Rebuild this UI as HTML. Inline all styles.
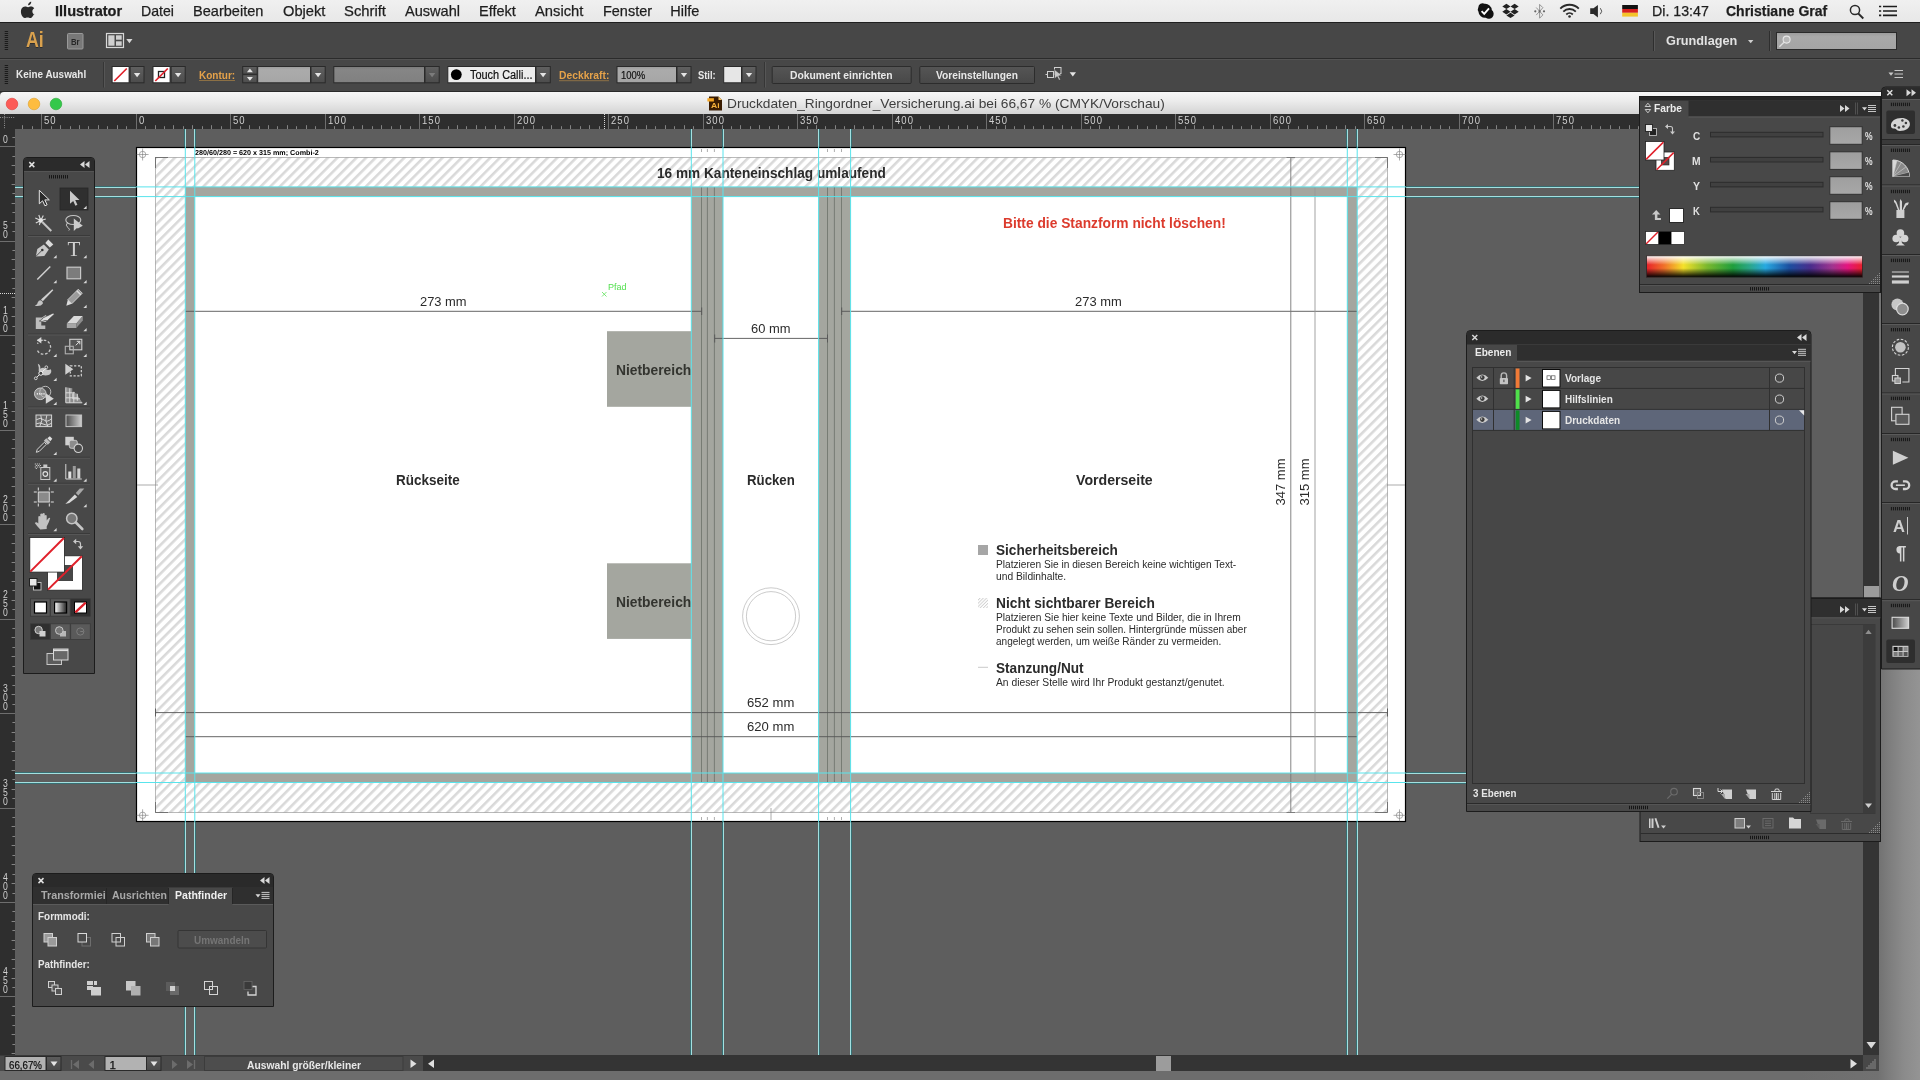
<!DOCTYPE html>
<html lang="de"><head><meta charset="utf-8"><title>Druckdaten_Ringordner_Versicherung.ai</title>
<style>
*{box-sizing:border-box;margin:0;padding:0}
html,body{width:1920px;height:1080px;overflow:hidden;background:#6b6b6b}
body{font-family:"Liberation Sans",sans-serif;font-size:11px;color:#ddd;position:relative}
.a{position:absolute}
.t{position:absolute;white-space:nowrap;line-height:1}
.ui{font-family:"Liberation Sans",sans-serif;font-weight:bold;font-size:11px;color:#dcdcdc;transform-origin:0 50%}
#desk{left:0;top:0;width:1920px;height:1080px;background:linear-gradient(90deg,#6d6d6d 0,#6d6d6d 1800px,#717171 1878px,#7c7c7c 1888px,#8b8b8b 1904px,#949494 1920px)}
#menubar{left:0;top:0;width:1920px;height:22px;background:linear-gradient(#f0f0f0,#e8e8e8)}
#menubar .t{-webkit-text-stroke:0.25px #1e1e1e}
#appbar{left:0;top:22px;width:1920px;height:37px;background:#474747;box-shadow:inset 0 1px 0 #1f1f1f,inset 0 -1px 0 #2b2b2b}
#ctrlbar{left:0;top:59px;width:1920px;height:33px;background:#474747;box-shadow:inset 0 1px 0 #535353,inset 0 -1px 0 #2a2a2a}
#titlebar{left:0;top:92px;width:1881px;height:22px;background:linear-gradient(#f7f7f7 0,#ececec 40%,#d4d4d4 100%);border-radius:4px 0 0 0}
#canvas{left:0;top:114px;width:1863px;height:941px;background:#5e5e5e;overflow:hidden}
#hruler{left:0;top:114px;width:1863px;height:15px;background:#2e2e2e}
#vruler{left:0;top:129px;width:15px;height:926px;background:#2e2e2e}
#vscroll{left:1863px;top:114px;width:16px;height:941px;background:#343434}
#statusbar{left:0;top:1055px;width:1879px;height:16px;background:#4a4a4a;box-shadow:inset 0 1px 0 #3a3a3a}
.panel{position:absolute;background:#484848;border:1px solid #262626}
.phead{position:absolute;left:0;right:0;top:0;background:#303030}
.dd{position:absolute;background:linear-gradient(#5a5a5a,#4a4a4a);border:1px solid #2c2c2c}
.fld{position:absolute;border:1px solid #2c2c2c}
</style></head>
<body>
<div id="root" class="a" style="left:0;top:0;width:1920px;height:1080px;will-change:transform;overflow:hidden">
<div id="desk" class="a"></div>
<div id="menubar" class="a">
<svg class="a" style="left:20px;top:1px" width="16" height="19" viewBox="0 0 16 19"><path fill="#2a2a2a" d="M10.9 1c.1 1-.3 1.9-.9 2.6-.6.7-1.500 1.200-2.400 1.100-.1-.9.300-1.900.9-2.500C9.100 1.500 10.100 1 10.900 1z M13.900 13.400c-.4.900-.600 1.300-1.100 2.100-.700 1.100-1.700 2.500-2.900 2.500-1.100 0-1.400-.700-2.900-.700-1.500 0-1.800.700-2.900.700-1.200 0-2.200-1.300-2.900-2.400C-.100 13.400-.300 10 .900 8.100 1.700 6.800 3.100 6 4.400 6c1.300 0 2.100.700 3.200.700 1.100 0 1.700-.700 3.200-.700 1.100 0 2.300.600 3.200 1.700-2.800 1.500-2.300 5.500.100 6.300z" transform="translate(0.8 -0.2) scale(0.96)"/></svg>
<div class="t" style="left:54.80px;top:3.82px;font-size:14.50px;font-weight:bold;color:#1e1e1e;transform:scaleX(1.0038);transform-origin:0 50%;">Illustrator</div>
<div class="t" style="left:140.60px;top:3.82px;font-size:14.50px;font-weight:normal;color:#1e1e1e;transform:scaleX(0.9717);transform-origin:0 50%;">Datei</div>
<div class="t" style="left:192.90px;top:3.82px;font-size:14.50px;font-weight:normal;color:#1e1e1e;transform:scaleX(1.0042);transform-origin:0 50%;">Bearbeiten</div>
<div class="t" style="left:282.70px;top:3.82px;font-size:14.50px;font-weight:normal;color:#1e1e1e;transform:scaleX(1.0118);transform-origin:0 50%;">Objekt</div>
<div class="t" style="left:344.00px;top:3.82px;font-size:14.50px;font-weight:normal;color:#1e1e1e;transform:scaleX(1.0217);transform-origin:0 50%;">Schrift</div>
<div class="t" style="left:405.00px;top:3.82px;font-size:14.50px;font-weight:normal;color:#1e1e1e;transform:scaleX(1.0035);transform-origin:0 50%;">Auswahl</div>
<div class="t" style="left:479.20px;top:3.82px;font-size:14.50px;font-weight:normal;color:#1e1e1e;transform:scaleX(0.9992);transform-origin:0 50%;">Effekt</div>
<div class="t" style="left:535.00px;top:3.82px;font-size:14.50px;font-weight:normal;color:#1e1e1e;transform:scaleX(1.0156);transform-origin:0 50%;">Ansicht</div>
<div class="t" style="left:602.60px;top:3.82px;font-size:14.50px;font-weight:normal;color:#1e1e1e;transform:scaleX(0.9968);transform-origin:0 50%;">Fenster</div>
<div class="t" style="left:670.30px;top:3.82px;font-size:14.50px;font-weight:normal;color:#1e1e1e;transform:scaleX(1.0000);transform-origin:0 50%;">Hilfe</div>
<div class="t" style="left:1652.00px;top:3.82px;font-size:14.50px;font-weight:normal;color:#1e1e1e;transform:scaleX(0.9781);transform-origin:0 50%;">Di. 13:47</div>
<div class="t" style="left:1726.30px;top:3.82px;font-size:14.50px;font-weight:bold;color:#1e1e1e;transform:scaleX(0.9660);transform-origin:0 50%;">Christiane Graf</div>
<svg class="a" style="left:1470px;top:0" width="440" height="22" viewBox="1470 0 440 22">
<path fill="#111" d="M1478.3 7.400a4.300 4.300 0 0 1 6.300-3.600 6.600 6.600 0 0 1 7.200 6.300 4.600 4.600 0 0 1-6 7.700 6.800 6.800 0 0 1-7.400-6.400 4.300 4.300 0 0 1-.1-4z"/><path d="M1481.600 11.200l2.600 2.600 4.800-5.500" fill="none" stroke="#fff" stroke-width="1.900"/>
<path fill="#222" d="M1506.400 3.700l4.100 2.700-4.100 2.700-4.100-2.700z M1514.600 3.700l4.100 2.700-4.100 2.700-4.100-2.700z M1502.300 11.800l4.100-2.700 4.100 2.700-4.100 2.700z M1510.500 11.800l4.100-2.700 4.100 2.700-4.100 2.700z M1506.400 15.400l4.100-2.700 4.100 2.700-4.100 2.700z"/>
<path d="M1536.200 7.500l6.700 7.400-3.300 3.300V4.400l3.300 3.300-6.700 7.400" fill="none" stroke="#8b8b8b" stroke-width="0.9"/><circle cx="1535.300" cy="11.300" r="1.100" fill="#666"/><circle cx="1539.600" cy="11.300" r="1.100" fill="#666"/><circle cx="1544" cy="11.300" r="1.100" fill="#666"/>
<g fill="none" stroke="#2a2a2a" stroke-width="1.800"><path d="M1560.300 8.600a13 13 0 0 1 18.500 0"/><path d="M1563.300 11.600a8.800 8.800 0 0 1 12.500 0"/><path d="M1566.300 14.500a4.600 4.600 0 0 1 6.500 0"/></g><circle cx="1569.550" cy="16.500" r="1.300" fill="#2a2a2a"/>
<path fill="#2a2a2a" d="M1590.200 8.300h3.300l4.400-3.400v12.500l-4.400-3.400h-3.300z"/><path d="M1600.300 8.200a4.300 4.300 0 0 1 0 6" fill="none" stroke="#555" stroke-width="1"/>
<rect x="1622.2" y="5" width="15.700" height="4" fill="#111"/><rect x="1622.2" y="9" width="15.700" height="3.800" fill="#d71f1f"/><rect x="1622.2" y="12.800" width="15.700" height="3.800" fill="#f4c42a"/>
<circle cx="1855" cy="10" r="4.600" fill="none" stroke="#2a2a2a" stroke-width="1.500"/><path d="M1858.300 13.500l5 5" stroke="#2a2a2a" stroke-width="1.900" fill="none"/>
<path d="M1879 6.500h2.200 M1883 6.500h14 M1879 11h2.200 M1883 11h14 M1879 15.400h2.200 M1883 15.400h14" stroke="#1c1c1c" stroke-width="1.700" fill="none"/>
</svg>
</div>

<div id="appbar" class="a">
<svg class="a" style="left:0;top:0" width="1920" height="37" viewBox="0 22 1920 37">
<path d="M4.7 31.5h3.4M4.7 33.5h3.4M4.7 35.5h3.4M4.7 37.5h3.4M4.7 39.5h3.4M4.7 41.5h3.4M4.7 43.5h3.4M4.7 45.5h3.4M4.7 47.5h3.4M4.7 49.5h3.4" stroke="#1b1b1b" stroke-width="1" fill="none"/><rect x="67.500" y="33.500" width="15.500" height="15.500" rx="1" fill="#787878" stroke="#9a9a9a" stroke-width="1"/>
<rect x="106.500" y="33.500" width="17" height="14" fill="#4a4a4a" stroke="#d8d8d8" stroke-width="1.200"/><rect x="108.300" y="35.300" width="6.200" height="10.400" fill="#cfcfcf"/><rect x="116" y="35.300" width="5.700" height="4.400" fill="#cfcfcf"/><rect x="116" y="41.300" width="5.700" height="4.400" fill="#cfcfcf"/><path d="M126.300 39h6.200l-3.100 4.200z" fill="#d8d8d8"/>
<path d="M1653.5 31v20" stroke="#2e2e2e" stroke-width="1"/><path d="M1654.5 31v20" stroke="#585858" stroke-width="1"/>
<path d="M1769.5 31v20" stroke="#2e2e2e" stroke-width="1"/><path d="M1770.5 31v20" stroke="#585858" stroke-width="1"/>
<path d="M1748 40h5.400l-2.700 3.300z" fill="#d0d0d0"/>
<defs><linearGradient id="sf" x1="0" y1="0" x2="0" y2="1"><stop offset="0" stop-color="#9a9a9a"/><stop offset="0.25" stop-color="#a9a9a9"/><stop offset="1" stop-color="#a4a4a4"/></linearGradient></defs><rect x="1776.500" y="32.500" width="120" height="17" fill="url(#sf)" stroke="#2a2a2a" stroke-width="1"/>
<circle cx="1786.600" cy="39.600" r="3.500" fill="#b8b8b8" stroke="#e6e6e6" stroke-width="1.100"/><path d="M1784 42.300l-4.600 4.400" stroke="#e0e0e0" stroke-width="1.300"/>
</svg>
<div class="t" style="left:25.80px;top:7.50px;font-size:21.50px;font-weight:bold;color:#d9a14e;transform:scaleX(0.8279);transform-origin:0 50%;text-shadow:0 1px 0 rgba(0,0,0,.35);">Ai</div>
<div class="t" style="left:71.40px;top:14.96px;font-size:9.50px;font-weight:bold;color:#262626;transform:scaleX(0.8156);transform-origin:0 50%;">Br</div>
<div class="t" style="left:1666.30px;top:13.24px;font-size:12.60px;font-weight:bold;color:#e2e2e2;transform:scaleX(1.0087);transform-origin:0 50%;">Grundlagen</div>
</div>

<div id="ctrlbar" class="a">
<svg class="a" style="left:0;top:0" width="1920" height="33" viewBox="0 59 1920 33">
<defs><linearGradient id="ddg" x1="0" y1="0" x2="0" y2="1"><stop offset="0" stop-color="#606060"/><stop offset="1" stop-color="#4c4c4c"/></linearGradient><linearGradient id="btg" x1="0" y1="0" x2="0" y2="1"><stop offset="0" stop-color="#555"/><stop offset="1" stop-color="#484848"/></linearGradient><linearGradient id="lf" x1="0" y1="0" x2="0" y2="1"><stop offset="0" stop-color="#9c9c9c"/><stop offset="0.2" stop-color="#ababab"/><stop offset="1" stop-color="#a6a6a6"/></linearGradient><linearGradient id="df" x1="0" y1="0" x2="0" y2="1"><stop offset="0" stop-color="#7a7a7a"/><stop offset="0.2" stop-color="#868686"/><stop offset="1" stop-color="#808080"/></linearGradient></defs>
<path d="M4.7 65.5h3.4M4.7 67.5h3.4M4.7 69.5h3.4M4.7 71.5h3.4M4.7 73.5h3.4M4.7 75.5h3.4M4.7 77.5h3.4M4.7 79.5h3.4M4.7 81.5h3.4M4.7 83.5h3.4" stroke="#1b1b1b" stroke-width="1" fill="none"/><path d="M103.5 62v25.500" stroke="#363636" stroke-width="1"/><path d="M104.5 62v25.500" stroke="#565656" stroke-width="1"/>
<path d="M764.5 62v25.500" stroke="#363636" stroke-width="1"/><path d="M765.5 62v25.500" stroke="#565656" stroke-width="1"/>
<rect x="112.1" y="66.5" width="17.0" height="16.3" fill="#fff" stroke="#2a2a2a" stroke-width="1"/>
<path d="M114.300 81l12.500-12.500" stroke="#e0202a" stroke-width="1.700"/>
<rect x="130.1" y="66.5" width="13.9" height="16.3" fill="url(#ddg)" stroke="#2a2a2a" stroke-width="1"/><path d="M133.9 72.9h6.400l-3.200 4.300z" fill="#e4e4e4"/>
<rect x="153.0" y="66.5" width="17.1" height="16.3" fill="#fff" stroke="#2a2a2a" stroke-width="1"/>
<rect x="158.500" y="71.500" width="6" height="6" fill="none" stroke="#222" stroke-width="1.300"/><path d="M155.300 81l12.500-12.500" stroke="#e0202a" stroke-width="1.700"/>
<rect x="171.1" y="66.5" width="14.1" height="16.3" fill="url(#ddg)" stroke="#2a2a2a" stroke-width="1"/><path d="M174.9 72.9h6.400l-3.200 4.300z" fill="#e4e4e4"/>
<path d="M199.500 80.500H235.500" stroke="#d39a45" stroke-width="1" stroke-dasharray="1 1"/>
<rect x="242.7" y="66.5" width="14.5" height="7.7" fill="url(#ddg)" stroke="#2a2a2a" stroke-width="1"/>
<rect x="242.7" y="74.7" width="14.5" height="8.1" fill="url(#ddg)" stroke="#2a2a2a" stroke-width="1"/>
<path d="M246.900 72.300h6l-3-3.700z M246.900 77h6l-3 3.700z" fill="#e4e4e4"/>
<rect x="257.7" y="66.5" width="52.8" height="16.3" fill="url(#lf)" stroke="#2a2a2a" stroke-width="1"/>
<rect x="311.0" y="66.5" width="14.2" height="16.3" fill="url(#ddg)" stroke="#2a2a2a" stroke-width="1"/><path d="M314.9 72.9h6.400l-3.200 4.300z" fill="#e4e4e4"/>
<rect x="333.8" y="66.5" width="90.7" height="16.3" fill="url(#df)" stroke="#2a2a2a" stroke-width="1"/>
<rect x="425.0" y="66.5" width="14.2" height="16.3" fill="url(#ddg)" stroke="#2a2a2a" stroke-width="1"/><path d="M428.9 72.9h6.400l-3.200 4.300z" fill="#7c7c7c"/>
<rect x="447.8" y="66.5" width="87.7" height="16.3" fill="#ececec" stroke="#2a2a2a" stroke-width="1"/>
<circle cx="456.300" cy="74.600" r="5.400" fill="#000"/>
<rect x="536.0" y="66.5" width="14.3" height="16.3" fill="url(#ddg)" stroke="#2a2a2a" stroke-width="1"/><path d="M539.9 72.9h6.400l-3.200 4.300z" fill="#e4e4e4"/>
<path d="M559.500 80.700H609.500" stroke="#d39a45" stroke-width="1" stroke-dasharray="1 1"/>
<rect x="617.0" y="66.5" width="59.5" height="16.3" fill="url(#lf)" stroke="#2a2a2a" stroke-width="1"/>
<rect x="677.0" y="66.5" width="14.0" height="16.3" fill="url(#ddg)" stroke="#2a2a2a" stroke-width="1"/><path d="M680.8 72.9h6.400l-3.200 4.300z" fill="#e4e4e4"/>
<rect x="723.7" y="66.5" width="17.8" height="16.3" fill="#e6e6e6" stroke="#2a2a2a" stroke-width="1"/>
<rect x="742.0" y="66.5" width="14.0" height="16.3" fill="url(#ddg)" stroke="#2a2a2a" stroke-width="1"/><path d="M745.8 72.9h6.400l-3.200 4.300z" fill="#e4e4e4"/>
<rect x="772.2" y="66.500" width="139.0" height="17" rx="1" fill="url(#btg)" stroke="#2c2c2c" stroke-width="1"/>
<rect x="919.8" y="66.500" width="114.7" height="17" rx="1" fill="url(#btg)" stroke="#2c2c2c" stroke-width="1"/>
<g fill="none" stroke="#d0d0d0" stroke-width="1"><rect x="1047.500" y="71.500" width="6" height="6"/><rect x="1054.500" y="67.500" width="6.500" height="6"/><path d="M1045.500 74.500h2 M1053.500 74.500h2"/></g><path d="M1054.500 69.500l7.500 6-3.300.4 1.800 3.700-1.500.7-1.800-3.700-2.700 2.200z" fill="#c8c8c8" stroke="#3a3a3a" stroke-width="0.500"/><path d="M1069.600 72.300h6.400l-3.200 4.300z" fill="#e4e4e4"/>
<path d="M1888.500 72.500h5l-2.500 3.200z" fill="#c8c8c8"/><path d="M1894.500 70.500h8.500 M1894.500 74h8.500 M1894.500 77.500h8.500" stroke="#c8c8c8" stroke-width="1.100"/>
</svg>
<div class="t" style="left:15.60px;top:8.93px;font-size:11.60px;font-weight:bold;color:#e8e8e8;transform:scaleX(0.8554);transform-origin:0 50%;">Keine Auswahl</div>
<div class="t" style="left:199.40px;top:9.93px;font-size:11.60px;font-weight:bold;color:#e5a24a;transform:scaleX(0.8645);transform-origin:0 50%;">Kontur:</div>
<div class="t" style="left:469.50px;top:9.94px;font-size:12.00px;font-weight:normal;color:#111;transform:scaleX(0.9098);transform-origin:0 50%;-webkit-text-stroke:0.2px #111;">Touch Calli...</div>
<div class="t" style="left:559.30px;top:9.93px;font-size:11.60px;font-weight:bold;color:#e5a24a;transform:scaleX(0.8885);transform-origin:0 50%;">Deckkraft:</div>
<div class="t" style="left:621.30px;top:9.83px;font-size:11.60px;font-weight:normal;color:#111;transform:scaleX(0.8183);transform-origin:0 50%;-webkit-text-stroke:0.2px #111;">100%</div>
<div class="t" style="left:698.00px;top:9.83px;font-size:11.60px;font-weight:bold;color:#e8e8e8;transform:scaleX(0.8073);transform-origin:0 50%;">Stil:</div>
<div class="t" style="left:790.00px;top:10.13px;font-size:11.60px;font-weight:bold;color:#e8e8e8;transform:scaleX(0.8902);transform-origin:0 50%;">Dokument einrichten</div>
<div class="t" style="left:935.70px;top:10.13px;font-size:11.60px;font-weight:bold;color:#e8e8e8;transform:scaleX(0.8792);transform-origin:0 50%;">Voreinstellungen</div>
</div>

<div class="a" style="left:0;top:92px;width:1881px;height:6px;background:#3a3a3a"></div>
<div id="titlebar" class="a">
<svg class="a" style="left:0;top:0" width="1881" height="22" viewBox="0 92 1881 22">
<circle cx="12.0" cy="104" r="5.800" fill="#fc5b57" stroke="#df3d38" stroke-width="0.600"/>
<circle cx="34.0" cy="104" r="5.800" fill="#fdbc40" stroke="#de9f29" stroke-width="0.600"/>
<circle cx="56.0" cy="104" r="5.800" fill="#34c84a" stroke="#27a835" stroke-width="0.600"/>
<path d="M709 96.500h9.500l3.500 3.500v10.500h-13z" fill="#3a1c02"/><path d="M718.500 96.500l3.500 3.500h-3.500z" fill="#f5c56b"/><rect x="707.400" y="98.200" width="6.500" height="3.300" fill="#f5a623"/>
</svg>
<div class="t" style="left:711.20px;top:11.22px;font-size:6.50px;font-weight:bold;color:#f7b23a;transform:scaleX(1.3231);transform-origin:0 50%;">Ai</div>
<div class="t" style="left:727.40px;top:4.95px;font-size:13.00px;font-weight:normal;color:#3e3e3e;transform:scaleX(1.0553);transform-origin:0 50%;">Druckdaten_Ringordner_Versicherung.ai bei 66,67 % (CMYK/Vorschau)</div>
</div>

<div id="canvas" class="a">
<svg class="a" style="left:0;top:-114px" width="1920" height="1080" viewBox="0 0 1920 1080">
<defs><pattern id="hatch" width="6.76" height="8" patternUnits="userSpaceOnUse" patternTransform="translate(5.67 0) rotate(45)"><rect x="0" y="0" width="2.600" height="8" fill="#d9d9d9"/></pattern><pattern id="hatch2" width="2.300" height="2.300" patternUnits="userSpaceOnUse" patternTransform="rotate(45)"><rect x="0" y="0" width="0.900" height="2.300" fill="#cfcfcf"/></pattern></defs>
<path d="M185.5 129V1055" stroke="#a2e0e0" stroke-width="1"/><path d="M184.5 129V1055" stroke="#376e72" stroke-width="1"/>
<path d="M194.5 129V1055" stroke="#a2e0e0" stroke-width="1"/><path d="M195.5 129V1055" stroke="#376e72" stroke-width="1"/>
<path d="M691.5 129V1055" stroke="#a2e0e0" stroke-width="1"/><path d="M690.5 129V1055" stroke="#376e72" stroke-width="1"/>
<path d="M723.5 129V1055" stroke="#a2e0e0" stroke-width="1"/><path d="M722.5 129V1055" stroke="#376e72" stroke-width="1"/>
<path d="M818.5 129V1055" stroke="#a2e0e0" stroke-width="1"/><path d="M819.5 129V1055" stroke="#376e72" stroke-width="1"/>
<path d="M850.5 129V1055" stroke="#a2e0e0" stroke-width="1"/><path d="M851.5 129V1055" stroke="#376e72" stroke-width="1"/>
<path d="M1347.5 129V1055" stroke="#a2e0e0" stroke-width="1"/><path d="M1346.5 129V1055" stroke="#376e72" stroke-width="1"/>
<path d="M1357.5 129V1055" stroke="#a2e0e0" stroke-width="1"/><path d="M1356.5 129V1055" stroke="#376e72" stroke-width="1"/>
<path d="M15 187.5H1863" stroke="#a2e0e0" stroke-width="1"/><path d="M15 186.5H1863" stroke="#376e72" stroke-width="1"/>
<path d="M15 196.5H1863" stroke="#a2e0e0" stroke-width="1"/><path d="M15 197.5H1863" stroke="#376e72" stroke-width="1"/>
<path d="M15 773.5H1863" stroke="#a2e0e0" stroke-width="1"/><path d="M15 772.5H1863" stroke="#376e72" stroke-width="1"/>
<path d="M15 782.5H1863" stroke="#a2e0e0" stroke-width="1"/><path d="M15 783.5H1863" stroke="#376e72" stroke-width="1"/>
<rect x="136.5" y="147.5" width="1269" height="674" fill="#fff" stroke="#000" stroke-width="1.2"/>
<rect x="155.5" y="157.5" width="1232" height="655" fill="url(#hatch)"/>
<rect x="185.3" y="186.9" width="1171.9" height="595.6" fill="#a4a69f"/>
<rect x="194.8" y="196.55" width="1152.5" height="576.45" fill="#fff"/>
<rect x="691.3" y="187" width="31.7" height="595.6" fill="#a4a69f"/>
<rect x="818.6" y="187" width="32.0" height="595.6" fill="#a4a69f"/>
<rect x="155.5" y="157.5" width="1232" height="655" fill="none" stroke="#777" stroke-width="0.5"/>
<path d="M155.5 168V157.5H168 M1375 157.5H1387.5V168 M155.5 802V812.5H168 M1375 812.5H1387.5V802" fill="none" stroke="#555" stroke-width="0.7"/>
<line x1="701.5" y1="187" x2="701.5" y2="782.6" stroke="#6c716a" stroke-width="0.8"/>
<line x1="701.5" y1="149" x2="701.5" y2="152" stroke="#777" stroke-width="0.6"/>
<line x1="701.5" y1="817" x2="701.5" y2="820" stroke="#777" stroke-width="0.6"/>
<line x1="707.4" y1="187" x2="707.4" y2="782.6" stroke="#6c716a" stroke-width="0.8"/>
<line x1="707.4" y1="149" x2="707.4" y2="152" stroke="#777" stroke-width="0.6"/>
<line x1="707.4" y1="817" x2="707.4" y2="820" stroke="#777" stroke-width="0.6"/>
<line x1="714.4" y1="187" x2="714.4" y2="782.6" stroke="#6c716a" stroke-width="0.8"/>
<line x1="714.4" y1="149" x2="714.4" y2="152" stroke="#777" stroke-width="0.6"/>
<line x1="714.4" y1="817" x2="714.4" y2="820" stroke="#777" stroke-width="0.6"/>
<line x1="827.5" y1="187" x2="827.5" y2="782.6" stroke="#6c716a" stroke-width="0.8"/>
<line x1="827.5" y1="149" x2="827.5" y2="152" stroke="#777" stroke-width="0.6"/>
<line x1="827.5" y1="817" x2="827.5" y2="820" stroke="#777" stroke-width="0.6"/>
<line x1="834.4" y1="187" x2="834.4" y2="782.6" stroke="#6c716a" stroke-width="0.8"/>
<line x1="834.4" y1="149" x2="834.4" y2="152" stroke="#777" stroke-width="0.6"/>
<line x1="834.4" y1="817" x2="834.4" y2="820" stroke="#777" stroke-width="0.6"/>
<line x1="841.5" y1="187" x2="841.5" y2="782.6" stroke="#6c716a" stroke-width="0.8"/>
<line x1="841.5" y1="149" x2="841.5" y2="152" stroke="#777" stroke-width="0.6"/>
<line x1="841.5" y1="817" x2="841.5" y2="820" stroke="#777" stroke-width="0.6"/>
<rect x="607" y="331.2" width="84.6" height="75.6" fill="#a4a69f"/>
<rect x="607" y="563.3" width="84.6" height="75.6" fill="#a4a69f"/>
<path d="M185 311.3H701.7 M701.7 307.5V315 M841.7 311.3H1357 M841.7 307.5V315" stroke="#555" stroke-width="0.9" fill="none"/>
<path d="M714.7 338.4H827.5 M714.7 334.5V342.5 M827.5 334.5V342.5" stroke="#555" stroke-width="0.9" fill="none"/>
<path d="M155.5 712.6H1387.5 M155.5 708.5V716.5 M1387.5 708.5V716.5" stroke="#555" stroke-width="0.9" fill="none"/>
<path d="M185 736.7H1357" stroke="#555" stroke-width="0.9" fill="none"/>
<path d="M1290.8 157.5V812.5 M1286.5 157.5H1295 M1286.5 812.5H1295" stroke="#777" stroke-width="0.9" fill="none"/>
<path d="M1315 187V782.6" stroke="#999" stroke-width="0.9" fill="none"/>
<path d="M137 485H158 M1387 485H1405 M771 808V820" stroke="#888" stroke-width="0.7" fill="none"/>
<g stroke="#777" stroke-width="0.6" fill="none"><circle cx="142.6" cy="154.5" r="3.2"/><path d="M136.6 154.5h12 M142.6 148.5v12"/></g>
<g stroke="#777" stroke-width="0.6" fill="none"><circle cx="1399.5" cy="154.5" r="3.2"/><path d="M1393.5 154.5h12 M1399.5 148.5v12"/></g>
<g stroke="#777" stroke-width="0.6" fill="none"><circle cx="142.6" cy="815.3" r="3.2"/><path d="M136.6 815.3h12 M142.6 809.3v12"/></g>
<g stroke="#777" stroke-width="0.6" fill="none"><circle cx="1399.5" cy="815.3" r="3.2"/><path d="M1393.5 815.3h12 M1399.5 809.3v12"/></g>
<circle cx="771" cy="616.2" r="28.4" fill="none" stroke="#b4b4b4" stroke-width="0.7"/>
<circle cx="771" cy="616.2" r="24.6" fill="none" stroke="#b4b4b4" stroke-width="0.7"/>
<rect x="978" y="545" width="10" height="10" fill="#a6a6a6"/>
<rect x="978" y="598" width="10" height="10" fill="url(#hatch2)"/>
<line x1="978" y1="667.3" x2="988" y2="667.3" stroke="#bbb" stroke-width="0.8"/>
<path d="M602 292l4.5 4.5 M606.5 292l-4.5 4.5" stroke="#5ee05a" stroke-width="0.8" fill="none"/>
</svg>
<div class="t" style="left:194.80px;top:35.08px;font-size:7.20px;font-weight:bold;color:#000;transform:scaleX(0.9978);transform-origin:0 50%;text-rendering:geometricPrecision;">280/60/280 = 620 x 315 mm; Combi-2</div>
<div class="t" style="left:657.00px;top:52.36px;font-size:14.20px;font-weight:bold;color:#2b2b2b;transform:scaleX(0.9611);transform-origin:0 50%;">16 mm Kanteneinschlag umlaufend</div>
<div class="t" style="left:1003.00px;top:102.26px;font-size:14.20px;font-weight:bold;color:#dc3b2d;transform:scaleX(0.9712);transform-origin:0 50%;">Bitte die Stanzform nicht löschen!</div>
<div class="t" style="left:419.70px;top:182.15px;font-size:12.80px;font-weight:normal;color:#2b2b2b;transform:scaleX(1.0085);transform-origin:0 50%;">273 mm</div>
<div class="t" style="left:1075.30px;top:182.15px;font-size:12.80px;font-weight:normal;color:#2b2b2b;transform:scaleX(1.0106);transform-origin:0 50%;">273 mm</div>
<div class="t" style="left:751.20px;top:209.35px;font-size:12.80px;font-weight:normal;color:#2b2b2b;transform:scaleX(1.0101);transform-origin:0 50%;">60 mm</div>
<div class="t" style="left:616.00px;top:249.36px;font-size:14.20px;font-weight:bold;color:#33342f;transform:scaleX(0.9739);transform-origin:0 50%;">Nietbereich</div>
<div class="t" style="left:616.00px;top:481.36px;font-size:14.20px;font-weight:bold;color:#33342f;transform:scaleX(0.9739);transform-origin:0 50%;">Nietbereich</div>
<div class="t" style="left:396.00px;top:358.86px;font-size:14.20px;font-weight:bold;color:#2b2b2b;transform:scaleX(0.9494);transform-origin:0 50%;">Rückseite</div>
<div class="t" style="left:747.00px;top:358.86px;font-size:14.20px;font-weight:bold;color:#2b2b2b;transform:scaleX(0.9325);transform-origin:0 50%;">Rücken</div>
<div class="t" style="left:1076.00px;top:358.86px;font-size:14.20px;font-weight:bold;color:#2b2b2b;transform:scaleX(0.9960);transform-origin:0 50%;">Vorderseite</div>
<div class="t" style="left:747.00px;top:582.75px;font-size:12.80px;font-weight:normal;color:#2b2b2b;transform:scaleX(1.0236);transform-origin:0 50%;">652 mm</div>
<div class="t" style="left:747.00px;top:606.75px;font-size:12.80px;font-weight:normal;color:#2b2b2b;transform:scaleX(1.0236);transform-origin:0 50%;">620 mm</div>
<div class="t" style="left:996.30px;top:429.46px;font-size:14.20px;font-weight:bold;color:#2b2b2b;transform:scaleX(0.9599);transform-origin:0 50%;">Sicherheitsbereich</div>
<div class="t" style="left:996.30px;top:445.72px;font-size:10.00px;font-weight:normal;color:#2b2b2b;transform:scaleX(1.0152);transform-origin:0 50%;">Platzieren Sie in diesen Bereich keine wichtigen Text-</div>
<div class="t" style="left:996.30px;top:457.72px;font-size:10.00px;font-weight:normal;color:#2b2b2b;transform:scaleX(1.0263);transform-origin:0 50%;">und Bildinhalte.</div>
<div class="t" style="left:996.30px;top:482.36px;font-size:14.20px;font-weight:bold;color:#2b2b2b;transform:scaleX(0.9686);transform-origin:0 50%;">Nicht sichtbarer Bereich</div>
<div class="t" style="left:996.30px;top:498.72px;font-size:10.00px;font-weight:normal;color:#2b2b2b;transform:scaleX(1.0221);transform-origin:0 50%;">Platzieren Sie hier keine Texte und Bilder, die in Ihrem</div>
<div class="t" style="left:996.30px;top:510.72px;font-size:10.00px;font-weight:normal;color:#2b2b2b;transform:scaleX(0.9956);transform-origin:0 50%;">Produkt zu sehen sein sollen. Hintergründe müssen aber</div>
<div class="t" style="left:996.30px;top:522.72px;font-size:10.00px;font-weight:normal;color:#2b2b2b;transform:scaleX(1.0054);transform-origin:0 50%;">angelegt werden, um weiße Ränder zu vermeiden.</div>
<div class="t" style="left:996.30px;top:547.36px;font-size:14.20px;font-weight:bold;color:#2b2b2b;transform:scaleX(0.9583);transform-origin:0 50%;">Stanzung/Nut</div>
<div class="t" style="left:996.30px;top:563.72px;font-size:10.00px;font-weight:normal;color:#2b2b2b;transform:scaleX(1.0286);transform-origin:0 50%;">An dieser Stelle wird Ihr Produkt gestanzt/genutet.</div>
<div class="t" style="left:608.20px;top:168.60px;font-size:9.00px;font-weight:normal;color:#56e052;transform:scaleX(1.0057);transform-origin:0 50%;">Pfad</div>
<div class="t" style="left:1281.20px;top:367.50px;font-size:12.80px;color:#2b2b2b;width:0;height:0"><div class="t" style="left:0;top:0;transform:translate(-50%,-50%) rotate(-90deg) scaleX(1.0165);transform-origin:50% 50%">347 mm</div></div>
<div class="t" style="left:1305.30px;top:367.50px;font-size:12.80px;color:#2b2b2b;width:0;height:0"><div class="t" style="left:0;top:0;transform:translate(-50%,-50%) rotate(-90deg) scaleX(1.0165);transform-origin:50% 50%">315 mm</div></div>
<svg class="a" style="left:0;top:-114px" width="1920" height="1080" viewBox="0 0 1920 1080">
<defs><clipPath id="abc"><rect x="136" y="147" width="1270" height="675"/></clipPath></defs><g clip-path="url(#abc)">
<line x1="185.3" y1="129" x2="185.3" y2="1055" stroke="#58e4ec" stroke-width="1"/>
<line x1="194.8" y1="129" x2="194.8" y2="1055" stroke="#58e4ec" stroke-width="1"/>
<line x1="691.3" y1="129" x2="691.3" y2="1055" stroke="#58e4ec" stroke-width="1"/>
<line x1="723.0" y1="129" x2="723.0" y2="1055" stroke="#58e4ec" stroke-width="1"/>
<line x1="818.6" y1="129" x2="818.6" y2="1055" stroke="#58e4ec" stroke-width="1"/>
<line x1="850.6" y1="129" x2="850.6" y2="1055" stroke="#58e4ec" stroke-width="1"/>
<line x1="1347.3" y1="129" x2="1347.3" y2="1055" stroke="#58e4ec" stroke-width="1"/>
<line x1="1357.2" y1="129" x2="1357.2" y2="1055" stroke="#58e4ec" stroke-width="1"/>
<line x1="15" y1="186.9" x2="1863" y2="186.9" stroke="#58e4ec" stroke-width="1"/>
<line x1="15" y1="196.6" x2="1863" y2="196.6" stroke="#58e4ec" stroke-width="1"/>
<line x1="15" y1="773.0" x2="1863" y2="773.0" stroke="#58e4ec" stroke-width="1"/>
<line x1="15" y1="782.5" x2="1863" y2="782.5" stroke="#58e4ec" stroke-width="1"/>
</g></svg>
</div>

<div id="hruler" class="a">
<svg class="a" style="left:0;top:0" width="1863" height="15" viewBox="0 114 1863 15">
<path d="M22.50 129v-3.8M32.50 129v-2.8M51.50 129v-2.8M60.50 129v-3.8M70.50 129v-2.8M79.50 129v-3.8M88.50 129v-2.8M98.50 129v-3.8M107.50 129v-2.8M117.50 129v-3.8M126.50 129v-2.8M145.50 129v-2.8M155.50 129v-3.8M164.50 129v-2.8M173.50 129v-3.8M183.50 129v-2.8M192.50 129v-3.8M202.50 129v-2.8M211.50 129v-3.8M221.50 129v-2.8M240.50 129v-2.8M249.50 129v-3.8M259.50 129v-2.8M268.50 129v-3.8M277.50 129v-2.8M287.50 129v-3.8M296.50 129v-2.8M306.50 129v-3.8M315.50 129v-2.8M334.50 129v-2.8M344.50 129v-3.8M353.50 129v-2.8M362.50 129v-3.8M372.50 129v-2.8M381.50 129v-3.8M391.50 129v-2.8M400.50 129v-3.8M410.50 129v-2.8M429.50 129v-2.8M438.50 129v-3.8M448.50 129v-2.8M457.50 129v-3.8M466.50 129v-2.8M476.50 129v-3.8M485.50 129v-2.8M495.50 129v-3.8M504.50 129v-2.8M523.50 129v-2.8M533.50 129v-3.8M542.50 129v-2.8M551.50 129v-3.8M561.50 129v-2.8M570.50 129v-3.8M580.50 129v-2.8M589.50 129v-3.8M599.50 129v-2.8M618.50 129v-2.8M627.50 129v-3.8M636.50 129v-2.8M646.50 129v-3.8M655.50 129v-2.8M665.50 129v-3.8M674.50 129v-2.8M684.50 129v-3.8M693.50 129v-2.8M712.50 129v-2.8M722.50 129v-3.8M731.50 129v-2.8M740.50 129v-3.8M750.50 129v-2.8M759.50 129v-3.8M769.50 129v-2.8M778.50 129v-3.8M788.50 129v-2.8M807.50 129v-2.8M816.50 129v-3.8M825.50 129v-2.8M835.50 129v-3.8M844.50 129v-2.8M854.50 129v-3.8M863.50 129v-2.8M873.50 129v-3.8M882.50 129v-2.8M901.50 129v-2.8M911.50 129v-3.8M920.50 129v-2.8M929.50 129v-3.8M939.50 129v-2.8M948.50 129v-3.8M958.50 129v-2.8M967.50 129v-3.8M977.50 129v-2.8M996.50 129v-2.8M1005.50 129v-3.8M1014.50 129v-2.8M1024.50 129v-3.8M1033.50 129v-2.8M1043.50 129v-3.8M1052.50 129v-2.8M1062.50 129v-3.8M1071.50 129v-2.8M1090.50 129v-2.8M1099.50 129v-3.8M1109.50 129v-2.8M1118.50 129v-3.8M1128.50 129v-2.8M1137.50 129v-3.8M1147.50 129v-2.8M1156.50 129v-3.8M1166.50 129v-2.8M1185.50 129v-2.8M1194.50 129v-3.8M1203.50 129v-2.8M1213.50 129v-3.8M1222.50 129v-2.8M1232.50 129v-3.8M1241.50 129v-2.8M1251.50 129v-3.8M1260.50 129v-2.8M1279.50 129v-2.8M1288.50 129v-3.8M1298.50 129v-2.8M1307.50 129v-3.8M1317.50 129v-2.8M1326.50 129v-3.8M1336.50 129v-2.8M1345.50 129v-3.8M1355.50 129v-2.8M1373.50 129v-2.8M1383.50 129v-3.8M1392.50 129v-2.8M1402.50 129v-3.8M1411.50 129v-2.8M1421.50 129v-3.8M1430.50 129v-2.8M1440.50 129v-3.8M1449.50 129v-2.8M1468.50 129v-2.8M1477.50 129v-3.8M1487.50 129v-2.8M1496.50 129v-3.8M1506.50 129v-2.8M1515.50 129v-3.8M1525.50 129v-2.8M1534.50 129v-3.8M1544.50 129v-2.8M1562.50 129v-2.8M1572.50 129v-3.8M1581.50 129v-2.8M1591.50 129v-3.8M1600.50 129v-2.8M1610.50 129v-3.8M1619.50 129v-2.8M1629.50 129v-3.8M1638.50 129v-2.8M1657.50 129v-2.8M1666.50 129v-3.8M1676.50 129v-2.8M1685.50 129v-3.8M1695.50 129v-2.8M1704.50 129v-3.8M1714.50 129v-2.8M1723.50 129v-3.8M1733.50 129v-2.8M1751.50 129v-2.8M1761.50 129v-3.8M1770.50 129v-2.8M1780.50 129v-3.8M1789.50 129v-2.8M1799.50 129v-3.8M1808.50 129v-2.8M1818.50 129v-3.8M1827.50 129v-2.8M1846.50 129v-2.8M1855.50 129v-3.8" stroke="#9a9a9a" stroke-width="0.8" fill="none"/>
<path d="M41.50 114v15M136.50 114v15M230.50 114v15M325.50 114v15M419.50 114v15M514.50 114v15M608.50 114v15M703.50 114v15M797.50 114v15M892.50 114v15M986.50 114v15M1081.50 114v15M1175.50 114v15M1270.50 114v15M1364.50 114v15M1459.50 114v15M1553.50 114v15M1648.50 114v15M1742.50 114v15M1836.50 114v15" stroke="#6e6e6e" stroke-width="1" fill="none"/>
<path d="M604.500 114v15" stroke="#d8d8d8" stroke-width="1" stroke-dasharray="1 1" fill="none"/>
</svg>
<div class="t" style="left:43.70px;top:2.02px;font-size:10.00px;font-weight:normal;color:#d0d0d0;transform:scaleX(0.9520);transform-origin:0 50%;letter-spacing:1.1px;">50</div>
<div class="t" style="left:138.70px;top:2.02px;font-size:10.00px;font-weight:normal;color:#d0d0d0;transform:scaleX(0.9520);transform-origin:0 50%;letter-spacing:1.1px;">0</div>
<div class="t" style="left:232.70px;top:2.02px;font-size:10.00px;font-weight:normal;color:#d0d0d0;transform:scaleX(0.9520);transform-origin:0 50%;letter-spacing:1.1px;">50</div>
<div class="t" style="left:327.70px;top:2.02px;font-size:10.00px;font-weight:normal;color:#d0d0d0;transform:scaleX(0.9492);transform-origin:0 50%;letter-spacing:1.1px;">100</div>
<div class="t" style="left:421.70px;top:2.02px;font-size:10.00px;font-weight:normal;color:#d0d0d0;transform:scaleX(0.9492);transform-origin:0 50%;letter-spacing:1.1px;">150</div>
<div class="t" style="left:516.70px;top:2.02px;font-size:10.00px;font-weight:normal;color:#d0d0d0;transform:scaleX(0.9492);transform-origin:0 50%;letter-spacing:1.1px;">200</div>
<div class="t" style="left:610.70px;top:2.02px;font-size:10.00px;font-weight:normal;color:#d0d0d0;transform:scaleX(0.9492);transform-origin:0 50%;letter-spacing:1.1px;">250</div>
<div class="t" style="left:705.70px;top:2.02px;font-size:10.00px;font-weight:normal;color:#d0d0d0;transform:scaleX(0.9492);transform-origin:0 50%;letter-spacing:1.1px;">300</div>
<div class="t" style="left:799.70px;top:2.02px;font-size:10.00px;font-weight:normal;color:#d0d0d0;transform:scaleX(0.9492);transform-origin:0 50%;letter-spacing:1.1px;">350</div>
<div class="t" style="left:894.70px;top:2.02px;font-size:10.00px;font-weight:normal;color:#d0d0d0;transform:scaleX(0.9492);transform-origin:0 50%;letter-spacing:1.1px;">400</div>
<div class="t" style="left:988.70px;top:2.02px;font-size:10.00px;font-weight:normal;color:#d0d0d0;transform:scaleX(0.9492);transform-origin:0 50%;letter-spacing:1.1px;">450</div>
<div class="t" style="left:1083.70px;top:2.02px;font-size:10.00px;font-weight:normal;color:#d0d0d0;transform:scaleX(0.9492);transform-origin:0 50%;letter-spacing:1.1px;">500</div>
<div class="t" style="left:1177.70px;top:2.02px;font-size:10.00px;font-weight:normal;color:#d0d0d0;transform:scaleX(0.9492);transform-origin:0 50%;letter-spacing:1.1px;">550</div>
<div class="t" style="left:1272.70px;top:2.02px;font-size:10.00px;font-weight:normal;color:#d0d0d0;transform:scaleX(0.9492);transform-origin:0 50%;letter-spacing:1.1px;">600</div>
<div class="t" style="left:1366.70px;top:2.02px;font-size:10.00px;font-weight:normal;color:#d0d0d0;transform:scaleX(0.9492);transform-origin:0 50%;letter-spacing:1.1px;">650</div>
<div class="t" style="left:1461.70px;top:2.02px;font-size:10.00px;font-weight:normal;color:#d0d0d0;transform:scaleX(0.9492);transform-origin:0 50%;letter-spacing:1.1px;">700</div>
<div class="t" style="left:1555.70px;top:2.02px;font-size:10.00px;font-weight:normal;color:#d0d0d0;transform:scaleX(0.9492);transform-origin:0 50%;letter-spacing:1.1px;">750</div>
<div class="t" style="left:1650.70px;top:2.02px;font-size:10.00px;font-weight:normal;color:#d0d0d0;transform:scaleX(0.9492);transform-origin:0 50%;letter-spacing:1.1px;">800</div>
<div class="t" style="left:1744.70px;top:2.02px;font-size:10.00px;font-weight:normal;color:#d0d0d0;transform:scaleX(0.9492);transform-origin:0 50%;letter-spacing:1.1px;">850</div>
<div class="t" style="left:1838.70px;top:2.02px;font-size:10.00px;font-weight:normal;color:#d0d0d0;transform:scaleX(0.9492);transform-origin:0 50%;letter-spacing:1.1px;">900</div>
</div>
<div class="a" style="left:0;top:114px;width:15px;height:15px;background:#2e2e2e"><svg class="a" style="left:0;top:0" width="15" height="15"><path d="M0 3.5H15 M4.5 0V15" stroke="#aaa" stroke-width="0.8" stroke-dasharray="1 1.2" fill="none"/></svg></div>
<div id="vruler" class="a">
<svg class="a" style="left:0;top:0" width="15" height="926" viewBox="0 129 15 926">
<path d="M15 137.50h-2.6M15 156.50h-2.6M15 165.50h-3.4M15 174.50h-2.6M15 184.50h-3.4M15 193.50h-2.6M15 203.50h-3.4M15 212.50h-2.6M15 222.50h-3.4M15 231.50h-2.6M15 250.50h-2.6M15 259.50h-3.4M15 269.50h-2.6M15 278.50h-3.4M15 288.50h-2.6M15 297.50h-3.4M15 307.50h-2.6M15 316.50h-3.4M15 326.50h-2.6M15 345.50h-2.6M15 354.50h-3.4M15 363.50h-2.6M15 373.50h-3.4M15 382.50h-2.6M15 392.50h-3.4M15 401.50h-2.6M15 411.50h-3.4M15 420.50h-2.6M15 439.50h-2.6M15 448.50h-3.4M15 458.50h-2.6M15 467.50h-3.4M15 477.50h-2.6M15 486.50h-3.4M15 496.50h-2.6M15 505.50h-3.4M15 515.50h-2.6M15 534.50h-2.6M15 543.50h-3.4M15 552.50h-2.6M15 562.50h-3.4M15 571.50h-2.6M15 581.50h-3.4M15 590.50h-2.6M15 600.50h-3.4M15 609.50h-2.6M15 628.50h-2.6M15 637.50h-3.4M15 647.50h-2.6M15 656.50h-3.4M15 666.50h-2.6M15 675.50h-3.4M15 685.50h-2.6M15 694.50h-3.4M15 704.50h-2.6M15 722.50h-2.6M15 732.50h-3.4M15 741.50h-2.6M15 751.50h-3.4M15 760.50h-2.6M15 770.50h-3.4M15 779.50h-2.6M15 789.50h-3.4M15 798.50h-2.6M15 817.50h-2.6M15 826.50h-3.4M15 836.50h-2.6M15 845.50h-3.4M15 855.50h-2.6M15 864.50h-3.4M15 874.50h-2.6M15 883.50h-3.4M15 893.50h-2.6M15 911.50h-2.6M15 921.50h-3.4M15 930.50h-2.6M15 940.50h-3.4M15 949.50h-2.6M15 959.50h-3.4M15 968.50h-2.6M15 978.50h-3.4M15 987.50h-2.6M15 1006.50h-2.6M15 1015.50h-3.4M15 1025.50h-2.6M15 1034.50h-3.4M15 1044.50h-2.6M15 1053.50h-3.4" stroke="#9a9a9a" stroke-width="0.8" fill="none"/>
<path d="M0 146.50h15M0 241.50h15M0 335.50h15M0 430.50h15M0 524.50h15M0 619.50h15M0 713.50h15M0 808.50h15M0 902.50h15M0 996.50h15" stroke="#6e6e6e" stroke-width="1" fill="none"/>
<path d="M0 293.500h15" stroke="#d8d8d8" stroke-width="1" stroke-dasharray="1 1" fill="none"/>
</svg>
<div class="t" style="left:2.80px;top:6.42px;font-size:10.00px;font-weight:normal;color:#d0d0d0;transform:scaleX(0.8618);transform-origin:0 50%;">0</div>
<div class="t" style="left:2.80px;top:92.11px;font-size:10.00px;font-weight:normal;color:#d0d0d0;transform:scaleX(0.8618);transform-origin:0 50%;">5</div>
<div class="t" style="left:2.80px;top:101.42px;font-size:10.00px;font-weight:normal;color:#d0d0d0;transform:scaleX(0.8618);transform-origin:0 50%;">0</div>
<div class="t" style="left:2.80px;top:176.81px;font-size:10.00px;font-weight:normal;color:#d0d0d0;transform:scaleX(0.8618);transform-origin:0 50%;">1</div>
<div class="t" style="left:2.80px;top:186.12px;font-size:10.00px;font-weight:normal;color:#d0d0d0;transform:scaleX(0.8618);transform-origin:0 50%;">0</div>
<div class="t" style="left:2.80px;top:195.42px;font-size:10.00px;font-weight:normal;color:#d0d0d0;transform:scaleX(0.8618);transform-origin:0 50%;">0</div>
<div class="t" style="left:2.80px;top:271.81px;font-size:10.00px;font-weight:normal;color:#d0d0d0;transform:scaleX(0.8618);transform-origin:0 50%;">1</div>
<div class="t" style="left:2.80px;top:281.12px;font-size:10.00px;font-weight:normal;color:#d0d0d0;transform:scaleX(0.8618);transform-origin:0 50%;">5</div>
<div class="t" style="left:2.80px;top:290.42px;font-size:10.00px;font-weight:normal;color:#d0d0d0;transform:scaleX(0.8618);transform-origin:0 50%;">0</div>
<div class="t" style="left:2.80px;top:365.81px;font-size:10.00px;font-weight:normal;color:#d0d0d0;transform:scaleX(0.8618);transform-origin:0 50%;">2</div>
<div class="t" style="left:2.80px;top:375.11px;font-size:10.00px;font-weight:normal;color:#d0d0d0;transform:scaleX(0.8618);transform-origin:0 50%;">0</div>
<div class="t" style="left:2.80px;top:384.41px;font-size:10.00px;font-weight:normal;color:#d0d0d0;transform:scaleX(0.8618);transform-origin:0 50%;">0</div>
<div class="t" style="left:2.80px;top:460.81px;font-size:10.00px;font-weight:normal;color:#d0d0d0;transform:scaleX(0.8618);transform-origin:0 50%;">2</div>
<div class="t" style="left:2.80px;top:470.12px;font-size:10.00px;font-weight:normal;color:#d0d0d0;transform:scaleX(0.8618);transform-origin:0 50%;">5</div>
<div class="t" style="left:2.80px;top:479.41px;font-size:10.00px;font-weight:normal;color:#d0d0d0;transform:scaleX(0.8618);transform-origin:0 50%;">0</div>
<div class="t" style="left:2.80px;top:554.81px;font-size:10.00px;font-weight:normal;color:#d0d0d0;transform:scaleX(0.8618);transform-origin:0 50%;">3</div>
<div class="t" style="left:2.80px;top:564.12px;font-size:10.00px;font-weight:normal;color:#d0d0d0;transform:scaleX(0.8618);transform-origin:0 50%;">0</div>
<div class="t" style="left:2.80px;top:573.41px;font-size:10.00px;font-weight:normal;color:#d0d0d0;transform:scaleX(0.8618);transform-origin:0 50%;">0</div>
<div class="t" style="left:2.80px;top:649.81px;font-size:10.00px;font-weight:normal;color:#d0d0d0;transform:scaleX(0.8618);transform-origin:0 50%;">3</div>
<div class="t" style="left:2.80px;top:659.12px;font-size:10.00px;font-weight:normal;color:#d0d0d0;transform:scaleX(0.8618);transform-origin:0 50%;">5</div>
<div class="t" style="left:2.80px;top:668.41px;font-size:10.00px;font-weight:normal;color:#d0d0d0;transform:scaleX(0.8618);transform-origin:0 50%;">0</div>
<div class="t" style="left:2.80px;top:743.81px;font-size:10.00px;font-weight:normal;color:#d0d0d0;transform:scaleX(0.8618);transform-origin:0 50%;">4</div>
<div class="t" style="left:2.80px;top:753.12px;font-size:10.00px;font-weight:normal;color:#d0d0d0;transform:scaleX(0.8618);transform-origin:0 50%;">0</div>
<div class="t" style="left:2.80px;top:762.41px;font-size:10.00px;font-weight:normal;color:#d0d0d0;transform:scaleX(0.8618);transform-origin:0 50%;">0</div>
<div class="t" style="left:2.80px;top:837.81px;font-size:10.00px;font-weight:normal;color:#d0d0d0;transform:scaleX(0.8618);transform-origin:0 50%;">4</div>
<div class="t" style="left:2.80px;top:847.12px;font-size:10.00px;font-weight:normal;color:#d0d0d0;transform:scaleX(0.8618);transform-origin:0 50%;">5</div>
<div class="t" style="left:2.80px;top:856.41px;font-size:10.00px;font-weight:normal;color:#d0d0d0;transform:scaleX(0.8618);transform-origin:0 50%;">0</div>
</div>

<div id="vscroll" class="a"><div class="a" style="left:1px;top:472px;width:15px;height:12px;background:#9c9c9c"></div><svg class="a" style="left:0;top:925px" width="16" height="12"><path d="M3.500 3h9.500l-4.750 6.500z" fill="#dadada"/></svg></div>
<div id="statusbar" class="a">
<svg class="a" style="left:0;top:0" width="1879" height="16" viewBox="0 1055 1879 16">
<defs><linearGradient id="sdd" x1="0" y1="0" x2="0" y2="1"><stop offset="0" stop-color="#5c5c5c"/><stop offset="1" stop-color="#4a4a4a"/></linearGradient></defs><rect x="423" y="1055" width="1440" height="16" fill="#343434"/>
<rect x="1863" y="1055" width="16" height="16" fill="#484848"/>
<rect x="5" y="1056.500" width="41" height="14" fill="#b2b2b2" stroke="#2a2a2a" stroke-width="1"/>
<rect x="46.500" y="1056.500" width="14.500" height="14" fill="url(#sdd)" stroke="#2a2a2a" stroke-width="1"/><path d="M50.500 1061.500h7l-3.500 4.700z" fill="#e4e4e4"/>
<path d="M71.500 1060v9" stroke="#6c6c6c" stroke-width="1.300"/><path d="M79 1060v9l-6-4.500z" fill="#6c6c6c"/><path d="M94 1060v9l-5.500-4.500z" fill="#6c6c6c"/>
<rect x="105" y="1056.500" width="41.500" height="14" fill="#b2b2b2" stroke="#2a2a2a" stroke-width="1"/>
<rect x="146.500" y="1056.500" width="14.500" height="14" fill="url(#sdd)" stroke="#2a2a2a" stroke-width="1"/><path d="M150.500 1061.500h7l-3.500 4.700z" fill="#e4e4e4"/>
<path d="M172 1060v9l5.500-4.500z" fill="#6c6c6c"/><path d="M187 1060v9l6-4.500z" fill="#6c6c6c"/><path d="M194.500 1060v9" stroke="#6c6c6c" stroke-width="1.300"/>
<rect x="204.500" y="1056.500" width="198.500" height="14" fill="#4d4d4d" stroke="#3c3c3c" stroke-width="1"/>
<path d="M410.500 1059.500v8.500l6-4.250z" fill="#e0e0e0"/><path d="M434 1059.500v8.500l-6-4.250z" fill="#e0e0e0"/>
<rect x="1156" y="1056" width="15" height="15" fill="#9c9c9c"/>
<path d="M1850.500 1059v9.500l6.500-4.750z" fill="#e0e0e0"/>
<path d="M1866.5 1067.5h1v1h-1zM1868.5 1065.5h1v1h-1zM1868.5 1067.5h1v1h-1zM1870.5 1063.5h1v1h-1zM1870.5 1065.5h1v1h-1zM1870.5 1067.5h1v1h-1zM1872.5 1061.5h1v1h-1zM1872.5 1063.5h1v1h-1zM1872.5 1065.5h1v1h-1zM1872.5 1067.5h1v1h-1zM1874.5 1059.5h1v1h-1zM1874.5 1061.5h1v1h-1zM1874.5 1063.5h1v1h-1zM1874.5 1065.5h1v1h-1zM1874.5 1067.5h1v1h-1z" fill="#c8c8c8"/>
</svg>
<div class="t" style="left:8.50px;top:4.03px;font-size:11.60px;font-weight:normal;color:#111;transform:scaleX(0.8392);transform-origin:0 50%;-webkit-text-stroke:0.25px #111;">66,67%</div>
<div class="t" style="left:109.50px;top:4.03px;font-size:11.60px;font-weight:normal;color:#111;-webkit-text-stroke:0.25px #111;">1</div>
<div class="t" style="left:247.00px;top:4.13px;font-size:11.60px;font-weight:bold;color:#e8e8e8;transform:scaleX(0.8886);transform-origin:0 50%;">Auswahl größer/kleiner</div>
</div>

<svg class="a" style="left:0;top:0" width="1920" height="1080" viewBox="0 0 1920 1080">
<defs><linearGradient id="spec" x1="0" y1="0" x2="1" y2="0"><stop offset="0" stop-color="#e8212a"/><stop offset="0.08" stop-color="#f0702a"/><stop offset="0.17" stop-color="#f5e12a"/><stop offset="0.28" stop-color="#7ab82e"/><stop offset="0.40" stop-color="#1f9e3c"/><stop offset="0.48" stop-color="#2aa78c"/><stop offset="0.55" stop-color="#27a9e1"/><stop offset="0.66" stop-color="#1c4fa0"/><stop offset="0.76" stop-color="#4a2d8c"/><stop offset="0.86" stop-color="#a0358f"/><stop offset="0.93" stop-color="#e4157f"/><stop offset="1" stop-color="#e8212a"/></linearGradient><linearGradient id="specv" x1="0" y1="0" x2="0" y2="1"><stop offset="0" stop-color="#fff" stop-opacity="1"/><stop offset="0.42" stop-color="#fff" stop-opacity="0"/><stop offset="0.58" stop-color="#000" stop-opacity="0"/><stop offset="1" stop-color="#000" stop-opacity="1"/></linearGradient><linearGradient id="pg" x1="0" y1="0" x2="1" y2="0"><stop offset="0" stop-color="#fff"/><stop offset="1" stop-color="#222"/></linearGradient><linearGradient id="vb" x1="0" y1="0" x2="0" y2="1"><stop offset="0" stop-color="#9e9e9e"/><stop offset="1" stop-color="#a8a8a8"/></linearGradient></defs>
<rect x="1640" y="598" width="240.500" height="243.500" fill="#484848" stroke="#1c1c1c" stroke-width="1"/><rect x="1640.500" y="597.500" width="239.500" height="3" fill="#1c1c1c"/>
<rect x="1640.500" y="599" width="240" height="18.500" fill="#2f2f2f"/>
<path d="M1640.500 617.800h240" stroke="#585858" stroke-width="1"/>
<path d="M1840.0 606.0v7l4.500-3.500z M1845.0 606.0v7l4.500-3.500z" fill="#d8d8d8"/><path d="M1855.500 603.500v12 M1857.500 603.500v12" stroke="#505050" stroke-width="1"/><path d="M1862.0 608.3h5l-2.500 3.200z" fill="#d8d8d8"/><path d="M1868.0 606.5h8 M1868.0 608.5h8 M1868.0 610.5h8 M1868.0 612.5h8" stroke="#d8d8d8" stroke-width="0.900" fill="none"/><rect x="1810.500" y="624.500" width="64.500" height="189" fill="#474747" stroke="#3a3a3a" stroke-width="1"/>
<rect x="1863" y="625" width="12" height="188" fill="#3c3c3c"/>
<path d="M1865.300 634h6.400l-3.200-4.300z" fill="#8e8e8e"/><path d="M1865 803.500h7l-3.500 4.600z" fill="#cfcfcf"/>
<g fill="#cfcfcf"><path d="M1649 818.500h1.500v9.500h-1.500z M1651.500 818.500h2v9.500h-2z M1654.500 818.500l1.800-.5 3.200 9.500-1.800.5z"/><path d="M1661 825.500h5l-2.500 3z"/></g>
<rect x="1735" y="818.500" width="9.500" height="9.500" fill="#7e7e7e" stroke="#cfcfcf" stroke-width="1"/><path d="M1746 825.500h5l-2.500 3z" fill="#cfcfcf"/>
<g stroke="#6e6e6e" stroke-width="0.900" fill="none"><rect x="1763" y="818.500" width="10" height="9.500"/><path d="M1765 821h6 M1765 823.300h6 M1765 825.600h6"/></g>
<path d="M1789 820.500v8h12v-9.500h-6.500l-1.500-1.500h-4z" fill="#d6d6d6"/>
<path d="M1816 819.500h10v9.500h-6.500z" fill="#6a6a6a"/><path d="M1815.500 824l4 5v-5z" fill="#5a5a5a"/>
<g stroke="#6a6a6a" stroke-width="1" fill="none"><path d="M1841 821.500h11 M1844.500 821.500l1-2.500h3l1 2.500 M1842.300 823v6.500h8.400v-6.500 M1844.800 823v6 M1846.500 823v6 M1848.200 823v6"/></g>
<path d="M1869.0 832.0h1v1h-1zM1871.0 830.0h1v1h-1zM1871.0 832.0h1v1h-1zM1873.0 828.0h1v1h-1zM1873.0 830.0h1v1h-1zM1873.0 832.0h1v1h-1zM1875.0 826.0h1v1h-1zM1875.0 828.0h1v1h-1zM1875.0 830.0h1v1h-1zM1875.0 832.0h1v1h-1zM1877.0 824.0h1v1h-1zM1877.0 826.0h1v1h-1zM1877.0 828.0h1v1h-1zM1877.0 830.0h1v1h-1zM1877.0 832.0h1v1h-1zM1879.0 822.0h1v1h-1zM1879.0 824.0h1v1h-1zM1879.0 826.0h1v1h-1zM1879.0 828.0h1v1h-1zM1879.0 830.0h1v1h-1zM1879.0 832.0h1v1h-1z" fill="#8a8a8a"/><path d="M1640.500 833.500h240" stroke="#2c2c2c" stroke-width="1"/>
<path d="M1750.5 835.8v3.400M1752.5 835.8v3.400M1754.5 835.8v3.400M1756.5 835.8v3.400M1758.5 835.8v3.400M1760.5 835.8v3.400M1762.5 835.8v3.400M1764.5 835.8v3.400M1766.5 835.8v3.400M1768.5 835.8v3.400" stroke="#161616" stroke-width="1" fill="none"/><rect x="1639.500" y="96.500" width="241" height="196" fill="#484848" stroke="#1c1c1c" stroke-width="1"/>
<rect x="1640" y="97" width="240" height="3.500" fill="#262626"/>
<rect x="1688.500" y="100.500" width="191.500" height="16" fill="#2f2f2f"/>
<path d="M1688.500 117h191.500" stroke="#5a5a5a" stroke-width="1"/>
<path d="M1645.200 106.500l2.700-3.300 2.700 3.300z M1645.200 109.500l2.700 3.300 2.700-3.300z" fill="none" stroke="#d8d8d8" stroke-width="0.900"/>
<path d="M1840.0 105.0v7l4.500-3.500z M1845.0 105.0v7l4.500-3.500z" fill="#d8d8d8"/><path d="M1855.500 102.500v12 M1857.500 102.500v12" stroke="#505050" stroke-width="1"/><path d="M1862.0 107.3h5l-2.500 3.200z" fill="#d8d8d8"/><path d="M1868.0 105.5h8 M1868.0 107.5h8 M1868.0 109.5h8 M1868.0 111.5h8" stroke="#d8d8d8" stroke-width="0.900" fill="none"/><rect x="1649.500" y="128.500" width="7" height="7" fill="#222" stroke="#bbb" stroke-width="0.900"/><rect x="1645.500" y="124.500" width="7" height="7" fill="#e8e8e8" stroke="#222" stroke-width="0.900"/>
<path d="M1666 126.500h4.500a2 2 0 0 1 2 2v4" fill="none" stroke="#c8c8c8" stroke-width="1.100"/><path d="M1665 126.500l3-2.500v5z M1672.500 134.500l-2.500-3h5z" fill="#c8c8c8"/>
<rect x="1656" y="152" width="18.300" height="18.300" fill="#fff" stroke="#222" stroke-width="0.800"/><rect x="1661.300" y="157.300" width="7.700" height="7.700" fill="#5a4a4a" stroke="#222" stroke-width="0.600"/><path d="M1656.600 169.700l17.100-17.100" stroke="#e0202a" stroke-width="1.500"/>
<rect x="1645.500" y="141.500" width="18.500" height="18.500" fill="#fff" stroke="#222" stroke-width="0.800"/><path d="M1646.100 159.400l17.300-17.300" stroke="#e0202a" stroke-width="1.500"/>
<rect x="1710.500" y="132.3" width="112.500" height="4.600" fill="#404040" stroke="#2c2c2c" stroke-width="1"/>
<rect x="1829.800" y="126.7" width="32.400" height="17.600" fill="url(#vb)" stroke="#303030" stroke-width="1"/>
<rect x="1710.500" y="157.4" width="112.500" height="4.600" fill="#404040" stroke="#2c2c2c" stroke-width="1"/>
<rect x="1829.800" y="151.8" width="32.400" height="17.600" fill="url(#vb)" stroke="#303030" stroke-width="1"/>
<rect x="1710.500" y="182.3" width="112.500" height="4.600" fill="#404040" stroke="#2c2c2c" stroke-width="1"/>
<rect x="1829.800" y="176.7" width="32.400" height="17.600" fill="url(#vb)" stroke="#303030" stroke-width="1"/>
<rect x="1710.500" y="207.3" width="112.500" height="4.600" fill="#404040" stroke="#2c2c2c" stroke-width="1"/>
<rect x="1829.800" y="201.7" width="32.400" height="17.600" fill="url(#vb)" stroke="#303030" stroke-width="1"/>
<path d="M1652 214.500l4.200-4.500 4.200 4.500h-3v3.500h3.500v2h-6v-5.500z" fill="#c8c8c8"/>
<rect x="1669.500" y="208.500" width="14" height="14" fill="#fff" stroke="#2a2a2a" stroke-width="1"/>
<rect x="1645.500" y="231.500" width="13" height="13" fill="#fff"/><path d="M1646 244l12-12" stroke="#e0202a" stroke-width="1.500"/><rect x="1658.500" y="231.500" width="13" height="13" fill="#000"/><rect x="1671.500" y="231.500" width="13" height="13" fill="#fff"/><rect x="1645.500" y="231.500" width="39" height="13" fill="none" stroke="#2a2a2a" stroke-width="0.800"/>
<rect x="1646.600" y="255.800" width="216" height="21.400" fill="url(#spec)"/><rect x="1646.600" y="255.800" width="216" height="21.400" fill="url(#specv)"/><rect x="1646.600" y="255.800" width="216" height="21.400" fill="none" stroke="#2a2a2a" stroke-width="0.800"/>
<path d="M1869.0 283.0h1v1h-1zM1871.0 281.0h1v1h-1zM1871.0 283.0h1v1h-1zM1873.0 279.0h1v1h-1zM1873.0 281.0h1v1h-1zM1873.0 283.0h1v1h-1zM1875.0 277.0h1v1h-1zM1875.0 279.0h1v1h-1zM1875.0 281.0h1v1h-1zM1875.0 283.0h1v1h-1zM1877.0 275.0h1v1h-1zM1877.0 277.0h1v1h-1zM1877.0 279.0h1v1h-1zM1877.0 281.0h1v1h-1zM1877.0 283.0h1v1h-1zM1879.0 273.0h1v1h-1zM1879.0 275.0h1v1h-1zM1879.0 277.0h1v1h-1zM1879.0 279.0h1v1h-1zM1879.0 281.0h1v1h-1zM1879.0 283.0h1v1h-1z" fill="#8a8a8a"/><path d="M1640 284.500h240" stroke="#2a2a2a" stroke-width="1"/><path d="M1640 285.500h240" stroke="#555" stroke-width="1"/>
<path d="M1750.5 287.1v3.400M1752.5 287.1v3.400M1754.5 287.1v3.400M1756.5 287.1v3.400M1758.5 287.1v3.400M1760.5 287.1v3.400M1762.5 287.1v3.400M1764.5 287.1v3.400M1766.5 287.1v3.400M1768.5 287.1v3.400" stroke="#161616" stroke-width="1" fill="none"/><path d="M1466.500 811.500V334.500a4 4 0 0 1 4-4h336.500a4 4 0 0 1 4 4V811.500z" fill="#484848" stroke="#1c1c1c" stroke-width="1"/>
<path d="M1467 344V334.500a3.500 3.500 0 0 1 3.500-3.500h336.500a3.500 3.500 0 0 1 3.500 3.500V344z" fill="#2b2b2b"/>
<rect x="1517" y="344" width="293.500" height="16.800" fill="#2f2f2f"/>
<path d="M1467 344.500h343.500" stroke="#3a3a3a" stroke-width="1"/><path d="M1517 361.300h293.500" stroke="#5a5a5a" stroke-width="1"/>
<path d="M1472.3 335.0l5 5 M1477.3 335.0l-5 5" stroke="#d8d8d8" stroke-width="1.500" fill="none"/><path d="M1801.5 334.0v7l-4.500-3.500z M1806.5 334.0v7l-4.500-3.500z" fill="#d8d8d8"/><path d="M1792.0 351.1h5l-2.500 3.200z" fill="#d8d8d8"/><path d="M1798.0 349.3h8 M1798.0 351.3h8 M1798.0 353.3h8 M1798.0 355.3h8" stroke="#d8d8d8" stroke-width="0.900" fill="none"/><rect x="1472.500" y="367.500" width="332" height="416" fill="#474747" stroke="#303030" stroke-width="1"/>
<path d="M1473 388.4h331" stroke="#303030" stroke-width="1"/>
<path d="M1476.300 377.8q6-6.800 12 0q-6 6.400-12 0z" fill="#cdcdcd"/><circle cx="1482.300" cy="377.6" r="2.300" fill="#3a3a3a"/><circle cx="1481.600" cy="377.0" r="0.800" fill="#cdcdcd"/>
<path d="M1501.200 377.9v-2.300a2.700 2.700 0 0 1 5.400 0v2.300" fill="none" stroke="#b8b8b8" stroke-width="1.400"/><rect x="1499.800" y="377.9" width="8.200" height="6.300" rx="0.800" fill="#c4c4c4"/><rect x="1503.300" y="379.6" width="1.200" height="2.500" fill="#555"/>
<rect x="1515.700" y="368.5" width="3.800" height="19.4" fill="#f07a36"/>
<path d="M1525.600 374.8v6.600l6-3.300z" fill="#e4e4e4"/>
<rect x="1542.500" y="369.5" width="17.500" height="17.500" fill="#fff" stroke="#0c0c0c" stroke-width="1"/>
<rect x="1547" y="375.8" width="3.600" height="3.600" fill="none" stroke="#555" stroke-width="0.700"/><rect x="1551.400" y="375.8" width="3.600" height="3.600" fill="none" stroke="#555" stroke-width="0.700"/>
<circle cx="1779.500" cy="378.1" r="4.100" fill="none" stroke="#d0d0d0" stroke-width="1"/>
<path d="M1473 409.4h331" stroke="#303030" stroke-width="1"/>
<path d="M1476.300 398.8q6-6.800 12 0q-6 6.400-12 0z" fill="#cdcdcd"/><circle cx="1482.300" cy="398.6" r="2.300" fill="#3a3a3a"/><circle cx="1481.600" cy="398.0" r="0.800" fill="#cdcdcd"/>
<rect x="1515.700" y="389.4" width="3.800" height="19.5" fill="#4fe04a"/>
<path d="M1525.600 395.8v6.600l6-3.300z" fill="#e4e4e4"/>
<rect x="1542.500" y="390.4" width="17.500" height="17.500" fill="#fff" stroke="#0c0c0c" stroke-width="1"/>
<circle cx="1779.500" cy="399.1" r="4.100" fill="none" stroke="#d0d0d0" stroke-width="1"/>
<rect x="1473" y="409.9" width="331" height="20.5" fill="#5e6679"/>
<path d="M1473 430.4h331" stroke="#303030" stroke-width="1"/>
<path d="M1476.300 419.8q6-6.800 12 0q-6 6.400-12 0z" fill="#cdcdcd"/><circle cx="1482.300" cy="419.6" r="2.300" fill="#3a3a3a"/><circle cx="1481.600" cy="419.0" r="0.800" fill="#cdcdcd"/>
<rect x="1515.700" y="410.4" width="3.800" height="19.5" fill="#0e8a28"/>
<path d="M1525.600 416.8v6.600l6-3.300z" fill="#e4e4e4"/>
<rect x="1542.500" y="411.4" width="17.500" height="17.500" fill="#fff" stroke="#0c0c0c" stroke-width="1"/>
<circle cx="1779.500" cy="420.1" r="4.100" fill="none" stroke="#d0d0d0" stroke-width="1"/>
<path d="M1493.500 368v62.500 M1514.200 368v62.500 M1769.500 368v62.500" stroke="#303030" stroke-width="1"/>
<path d="M1799 410.300h5.200v5.200z" fill="#e8e8e8"/>
<circle cx="1674" cy="791.700" r="3.300" fill="none" stroke="#6c6c6c" stroke-width="1.100"/><path d="M1671.600 794.300l-4.300 4.300" stroke="#6c6c6c" stroke-width="1.200"/>
<rect x="1693.500" y="788.500" width="7" height="7" fill="#666" stroke="#d8d8d8" stroke-width="1.100"/><rect x="1697.500" y="792.500" width="6" height="6" fill="none" stroke="#8a8a8a" stroke-width="0.900"/>
<path d="M1722 789.500h10v9.500h-6.500z" fill="#d0d0d0"/><path d="M1721 794l4 5v-5z" fill="#a8a8a8"/><path d="M1718 788v3.500h4.500 M1720.500 789.500l2 2-2 2" stroke="#d8d8d8" stroke-width="1" fill="none"/>
<path d="M1746 789.500h10v9.500h-6.500z" fill="#d0d0d0"/><path d="M1745.500 794l4 5v-5z" fill="#a8a8a8"/>
<g stroke="#d4d4d4" stroke-width="1" fill="none"><path d="M1771 791.500h11 M1774.500 791.500l1-2.500h3l1 2.500 M1772.300 793v6.500h8.400v-6.500 M1774.800 793v6 M1776.500 793v6 M1778.200 793v6"/></g>
<path d="M1799.0 802.0h1v1h-1zM1801.0 800.0h1v1h-1zM1801.0 802.0h1v1h-1zM1803.0 798.0h1v1h-1zM1803.0 800.0h1v1h-1zM1803.0 802.0h1v1h-1zM1805.0 796.0h1v1h-1zM1805.0 798.0h1v1h-1zM1805.0 800.0h1v1h-1zM1805.0 802.0h1v1h-1zM1807.0 794.0h1v1h-1zM1807.0 796.0h1v1h-1zM1807.0 798.0h1v1h-1zM1807.0 800.0h1v1h-1zM1807.0 802.0h1v1h-1zM1809.0 792.0h1v1h-1zM1809.0 794.0h1v1h-1zM1809.0 796.0h1v1h-1zM1809.0 798.0h1v1h-1zM1809.0 800.0h1v1h-1zM1809.0 802.0h1v1h-1z" fill="#8a8a8a"/><path d="M1467 803.500h343.500" stroke="#2a2a2a" stroke-width="1"/><path d="M1467 804.500h343.500" stroke="#555" stroke-width="1"/>
<path d="M1629.5 805.8v3.400M1631.5 805.8v3.400M1633.5 805.8v3.400M1635.5 805.8v3.400M1637.5 805.8v3.400M1639.5 805.8v3.400M1641.5 805.8v3.400M1643.5 805.8v3.400M1645.5 805.8v3.400M1647.5 805.8v3.400" stroke="#161616" stroke-width="1" fill="none"/><path d="M23.500 673.500V161a3.500 3.500 0 0 1 3.500-3.500h64a3.500 3.500 0 0 1 3.500 3.500V673.500z" fill="#484848" stroke="#1c1c1c" stroke-width="1"/>
<path d="M24 171V161a3 3 0 0 1 3-3h64a3 3 0 0 1 3 3V171z" fill="#2b2b2b"/><path d="M24 171.500h70" stroke="#555" stroke-width="1"/>
<path d="M29.3 162.1l5 5 M34.3 162.1l-5 5" stroke="#e0e0e0" stroke-width="1.500" fill="none"/><path d="M84.5 161.1v7l-4.500-3.500z M89.5 161.1v7l-4.500-3.500z" fill="#d8d8d8"/><path d="M49.5 175.1v3.400M51.5 175.1v3.400M53.5 175.1v3.400M55.5 175.1v3.400M57.5 175.1v3.400M59.5 175.1v3.400M61.5 175.1v3.400M63.5 175.1v3.400M65.5 175.1v3.400M67.5 175.1v3.400" stroke="#161616" stroke-width="1" fill="none"/><defs><linearGradient id="tg" x1="0" y1="0" x2="1" y2="0"><stop offset="0" stop-color="#4a4a4a"/><stop offset="1" stop-color="#cfcfcf"/></linearGradient></defs>
<rect x="60" y="188" width="28" height="22" fill="#2f2f2f" stroke="#262626" stroke-width="0.800"/>
<g transform="translate(43.8 198.8)"><path d="M-4.500 -8.500v13.500l3.300-3 2.300 5 2.200-1-2.300-4.900h4.500z" fill="#2b2b2b" stroke="#e6e6e6" stroke-width="1"/></g>
<g transform="translate(73.8 198.8)"><path d="M-3.800 -8v13l3.200-2.800 2.200 4.800 2-1-2.200-4.700h4.300z" fill="#c9c9c9"/></g>
<path d="M86.6 209.0v-3.200l-3.200 3.200z" fill="#d8d8d8"/><g transform="translate(43.8 223.5)"><path d="M-3 -3l-5.500-2.500 M-3 -3l-2-5.500 M-3 -3l2.500-5 M-3 -3l5-1.500 M-3 -3l-5 2.500 M-3 -3l-1.500 4.500" stroke="#d8d8d8" stroke-width="1.100" fill="none"/><circle cx="-3" cy="-3" r="2.200" fill="#e6e6e6"/><path d="M-1.500 -1.500l9 9" stroke="#c4c4c4" stroke-width="2"/></g>
<g transform="translate(73.8 223.5)"><ellipse cx="-0.500" cy="-3.500" rx="7.500" ry="4.500" fill="none" stroke="#c4c4c4" stroke-width="1.100"/><path d="M-6 -1.500q-3 3.500 0 5.500t1 3" stroke="#c4c4c4" stroke-width="1" fill="none"/><path d="M0 -5v12.500l3.200-3 .8.400 5-2.600z" fill="#cdcdcd"/></g>
<path d="M28 235.5h62" stroke="#3a3a3a" stroke-width="1"/><path d="M28 236.5h62" stroke="#565656" stroke-width="1"/>
<g transform="translate(43.8 248.0)"><path d="M-8 8.500l1.500-7.500 6.500-4.500 5 5-4.500 6.500z" fill="#c8c8c8"/><circle cx="-1.500" cy="2" r="1.300" fill="#333"/><path d="M-8 8.500l5.500-5.500" stroke="#333" stroke-width="0.800"/><path d="M1.500 -5l3-3.500 5 5-3.500 3z" fill="#dadada"/></g>
<path d="M56.6 258.2v-3.200l-3.200 3.200z" fill="#d8d8d8"/><text x="73.8" y="256" font-family="Liberation Serif,serif" font-size="21" fill="#d0d0d0" text-anchor="middle">T</text>
<path d="M86.6 258.2v-3.200l-3.200 3.200z" fill="#d8d8d8"/><g transform="translate(43.8 273.0)"><path d="M-6.500 6.500l13-13" stroke="#d0d0d0" stroke-width="1.500"/></g>
<path d="M56.6 283.2v-3.200l-3.200 3.200z" fill="#d8d8d8"/><g transform="translate(73.8 273.0)"><rect x="-6.800" y="-5.800" width="13.600" height="11.600" fill="#7c7c7c" stroke="#c8c8c8" stroke-width="1.200"/></g>
<path d="M86.6 283.2v-3.200l-3.200 3.200z" fill="#d8d8d8"/><g transform="translate(43.8 297.7)"><path d="M8.500 -8.500l1 1-10.500 11-1.800-1.800z" fill="#d0d0d0"/><path d="M-3.500 2.500q3 1 2.500 3.500-2 3-8 2 3-1.500 3-3.500 1-2 2.500-2z" fill="#c4c4c4"/></g>
<g transform="translate(73.8 297.7)"><path d="M4.500 -8.500l4 4-10.500 10.500-4-4z" fill="#9a9a9a" stroke="#d0d0d0" stroke-width="0.900"/><path d="M-6 2l4 4-5.500 2z" fill="#dcdcdc"/><path d="M3 -7l4 4" stroke="#ddd" stroke-width="1.500"/></g>
<path d="M86.6 307.9v-3.200l-3.200 3.200z" fill="#d8d8d8"/><g transform="translate(43.8 321.0)"><path d="M-8 -3.500h6l4-2.500 3 3.500-3 3.500h-4.500v3.500h4v3.500h-9.500z" fill="#bdbdbd"/><path d="M9.500 -8l1 1.200-7 6.500-2.500-.2q-3 2-5.500 .5 3-1 3.500-3z" fill="#e0e0e0" stroke="#333" stroke-width="0.600"/></g>
<g transform="translate(73.8 321.0)"><path d="M-7 2.500l7-7.500h9l-6.500 7.500z" fill="#dadada"/><path d="M-7 2.500h9.500v4.500h-9.500z" fill="#a6a6a6"/><path d="M2.500 2.500l6.500-7.500v4.500l-6.500 7.500z" fill="#8c8c8c"/></g>
<path d="M86.6 331.2v-3.200l-3.200 3.200z" fill="#d8d8d8"/><path d="M28 334.0h62" stroke="#3a3a3a" stroke-width="1"/><path d="M28 335.0h62" stroke="#565656" stroke-width="1"/>
<g transform="translate(43.8 346.8)"><path d="M-3.500 -6.500a7 7 0 1 1 -3.500 6" fill="none" stroke="#c8c8c8" stroke-width="1.300" stroke-dasharray="2.600 1.800" transform="rotate(180) scale(1 -1) rotate(150)"/><path d="M-6.500 -6.500h5.500" stroke="#c8c8c8" stroke-width="1.300"/><path d="M-7 -6.500l4.500-3.200v6.400z" fill="#d8d8d8"/></g>
<path d="M56.6 357.0v-3.200l-3.200 3.200z" fill="#d8d8d8"/><g transform="translate(73.8 346.8)"><rect x="-4" y="-7.500" width="12" height="10.500" fill="#555" stroke="#d0d0d0" stroke-width="1.100"/><rect x="-8.500" y="-0.500" width="8" height="7.500" fill="none" stroke="#b0b0b0" stroke-width="1.100"/><path d="M2 -1.500l4-4 M3 -5.500h3v3" stroke="#e0e0e0" stroke-width="1" fill="none"/></g>
<path d="M86.6 357.0v-3.200l-3.200 3.200z" fill="#d8d8d8"/><g transform="translate(43.8 370.8)"><path d="M-6 -7q3 1 2.500 5 3-2 5 0t5.500 .5q1.500 3-1.500 5.500-5 2-9-1-2.500-3-1.500-6z" fill="#c6c6c6"/><path d="M-8 7.500l10.500-10.500" stroke="#eee" stroke-width="1"/><circle cx="-8" cy="7.500" r="1.400" fill="#444" stroke="#eee" stroke-width="0.800"/><circle cx="-3" cy="2.500" r="2" fill="#444" stroke="#eee" stroke-width="1"/><circle cx="2.500" cy="-3.500" r="1.400" fill="#444" stroke="#eee" stroke-width="0.800"/></g>
<path d="M56.6 381.0v-3.200l-3.200 3.200z" fill="#d8d8d8"/><g transform="translate(73.8 370.8)"><rect x="-3.500" y="-5" width="11" height="10" fill="#444" stroke="#d8d8d8" stroke-width="1.200" stroke-dasharray="2.200 1.600"/><path d="M-8.500 -7v11l8-5.500z" fill="#cfcfcf"/></g>
<g transform="translate(43.8 394.8)"><circle cx="-3.500" cy="-1" r="5.800" fill="#8a8a8a" stroke="#cfcfcf" stroke-width="1"/><circle cx="1.500" cy="-3" r="5.500" fill="none" stroke="#bdbdbd" stroke-width="1"/><path d="M-7 -1h8" stroke="#fff" stroke-width="1.200" stroke-dasharray="1.200 1"/><path d="M2 -1.500v10.500l8-5z" fill="#d4d4d4"/></g>
<path d="M56.6 405.0v-3.200l-3.200 3.200z" fill="#d8d8d8"/><g transform="translate(73.8 394.8)"><path d="M-8 -7.500v15.500h16.500l-6-9.500h-4v-5z" fill="#8e8e8e"/><path d="M-8 -7.500v15.500h16.500 M-4 -6.500v14.500 M0 -3v11 M3.500 -1v7 M-8 -2h9 M-8 3h12 M-1 -1.500v5.500h7" stroke="#dadada" stroke-width="1" fill="none"/></g>
<path d="M86.6 405.0v-3.200l-3.200 3.200z" fill="#d8d8d8"/><path d="M28 407.0h62" stroke="#3a3a3a" stroke-width="1"/><path d="M28 408.0h62" stroke="#565656" stroke-width="1"/>
<g transform="translate(43.8 420.8)"><rect x="-7.800" y="-5.800" width="15.600" height="11.600" fill="#666" stroke="#d4d4d4" stroke-width="1"/><path d="M-7.500 -1q4-3 7.500 0t7.500 -1 M-7.500 3q4-2 7.500 .5t7.500 -1 M-3 -5.500q2.500 5-1 11 M3 -5.500q-2.500 5 1 11" stroke="#e0e0e0" stroke-width="0.900" fill="none"/></g>
<rect x="66.0" y="415.0" width="15.600" height="11.600" fill="url(#tg)" stroke="#c4c4c4" stroke-width="1"/>
<g transform="translate(43.8 444.8)"><path d="M-7.500 7.500l1-3 7-7 2 2-7 7z" fill="#444" stroke="#d4d4d4" stroke-width="1"/><path d="M0 -4l2.500-2.500 4 4-2.500 2.500z" fill="#bdbdbd"/><path d="M3.500 -6.500l2.500-2 2.500 2.500-2 2.500z" fill="#e0e0e0"/></g>
<path d="M56.6 455.0v-3.200l-3.200 3.200z" fill="#d8d8d8"/><g transform="translate(73.8 444.8)"><rect x="-8.500" y="-8" width="8.500" height="8.500" fill="#d0d0d0"/><rect x="-4.500" y="-4.500" width="8" height="8" rx="2" fill="#8c8c8c" stroke="#cfcfcf" stroke-width="0.900"/><circle cx="4.500" cy="3.500" r="4.200" fill="#4a4a4a" stroke="#d0d0d0" stroke-width="1.100"/></g>
<path d="M28 457.3h62" stroke="#3a3a3a" stroke-width="1"/><path d="M28 458.3h62" stroke="#565656" stroke-width="1"/>
<g transform="translate(43.8 471.5)"><rect x="-3" y="-4" width="9" height="12" fill="#555" stroke="#c8c8c8" stroke-width="1"/><circle cx="1.500" cy="2.500" r="2.300" fill="none" stroke="#e0e0e0" stroke-width="1.200"/><rect x="-0.500" y="-7" width="4" height="2.500" fill="#c8c8c8"/><path d="M-9 -7.500h1M-7 -7.500h1M-5 -7.500h1M-8 -6h1M-6 -6h1M-4 -6h1M-9 -4.500h1M-7 -4.500h1M-5 -4.500h1M-8 -3h1" stroke="#e0e0e0" stroke-width="1"/></g>
<path d="M56.6 481.7v-3.200l-3.200 3.200z" fill="#d8d8d8"/><g transform="translate(73.8 471.5)"><path d="M-8 -7.500v15h16" stroke="#d4d4d4" stroke-width="1" fill="none"/><rect x="-5.500" y="0" width="3" height="7" fill="#e0e0e0"/><rect x="-1" y="-5.500" width="3" height="12.500" fill="#9a9a9a"/><rect x="3.500" y="-3" width="3" height="10" fill="#d0d0d0"/></g>
<path d="M86.6 481.7v-3.200l-3.200 3.200z" fill="#d8d8d8"/><path d="M28 483.3h62" stroke="#3a3a3a" stroke-width="1"/><path d="M28 484.3h62" stroke="#565656" stroke-width="1"/>
<g transform="translate(43.8 497.0)"><rect x="-5.500" y="-5" width="11" height="10" fill="#8a8a8a" stroke="#d8d8d8" stroke-width="1"/><path d="M-10 -5h3 M7 -5h3 M-10 5h3 M7 5h3 M-5.500 -9.500v3 M5.500 -9.500v3 M-5.500 6.500v3 M5.500 6.500v3" stroke="#e0e0e0" stroke-width="1"/></g>
<g transform="translate(73.8 497.0)"><path d="M-8.500 7l9.500-9.500 2.500 2.500-8 6z" fill="#d8d8d8"/><path d="M2 -4l4-4.500h4.500l-6 7z" fill="#a8a8a8"/></g>
<path d="M86.6 507.2v-3.200l-3.200 3.200z" fill="#d8d8d8"/><g transform="translate(43.8 521.0)"><path d="M-3.500 8.500q-3.500-3.500-5.500-6.500 1.500-1.500 3.500 .5v-7q1.200-1.200 2 0v-2.500q1.200-1.200 2.200 0v-.5q1.200-1.200 2.200 0v2q1.200-1 2 0v5q2-3.500 3.500-2.500-1 4-3.500 8.500v2.500z" fill="#c2c2c2"/></g>
<path d="M56.6 531.2v-3.200l-3.200 3.200z" fill="#d8d8d8"/><g transform="translate(73.8 521.0)"><circle cx="-2" cy="-2.500" r="5.200" fill="#777" stroke="#c6c6c6" stroke-width="1.500"/><path d="M2 1.500l6.500 6.500" stroke="#c6c6c6" stroke-width="2.600" stroke-linecap="round"/></g>
<path d="M28 533.5h62" stroke="#3a3a3a" stroke-width="1"/><path d="M28 534.5h62" stroke="#565656" stroke-width="1"/>
<rect x="47.500" y="555.800" width="35" height="34.400" fill="#fff" stroke="#222" stroke-width="0.800"/><rect x="57.300" y="565.300" width="15.400" height="15.400" fill="#474747" stroke="#222" stroke-width="0.600"/><path d="M48 589.600l33.800-33.300" stroke="#e0202a" stroke-width="2"/>
<rect x="29.800" y="537.500" width="34.600" height="34.600" fill="#fff" stroke="#222" stroke-width="0.800"/><path d="M30.300 571.600l33.600-33.600" stroke="#e0202a" stroke-width="2"/>
<path d="M74.500 541.500h3.500a2.500 2.500 0 0 1 2.500 2.500v3.500" fill="none" stroke="#c8c8c8" stroke-width="1.200"/><path d="M73 541.500l3.200-2.700v5.400z M80.500 549.500l-2.700-3.200h5.400z" fill="#c8c8c8"/>
<rect x="33.500" y="582.500" width="7.500" height="7.500" fill="#111" stroke="#bdbdbd" stroke-width="1"/><rect x="29.500" y="578.500" width="7.500" height="7.500" fill="#e8e8e8" stroke="#222" stroke-width="1"/>
<rect x="30.5" y="598.800" width="19.600" height="17.400" fill="#585858" stroke="#3a3a3a" stroke-width="0.800"/>
<rect x="50.6" y="598.800" width="19.600" height="17.400" fill="#585858" stroke="#3a3a3a" stroke-width="0.800"/>
<rect x="70.7" y="598.800" width="19.600" height="17.400" fill="#303030" stroke="#3a3a3a" stroke-width="0.800"/>
<rect x="34.500" y="602" width="12" height="11" fill="#fff" stroke="#000" stroke-width="1.200"/>
<rect x="54.600" y="602" width="12" height="11" fill="url(#pg)" stroke="#000" stroke-width="1.200"/>
<rect x="74.500" y="602" width="12" height="11" fill="#fff" stroke="#000" stroke-width="1"/><path d="M75.300 612.300l10.400-9.600" stroke="#e0202a" stroke-width="2.300"/>
<rect x="30.5" y="623.800" width="19.600" height="15.600" fill="#2f2f2f" stroke="#3a3a3a" stroke-width="0.800"/>
<rect x="50.6" y="623.800" width="19.600" height="15.600" fill="#5a5a5a" stroke="#3a3a3a" stroke-width="0.800"/>
<rect x="70.7" y="623.800" width="19.600" height="15.600" fill="#5a5a5a" stroke="#3a3a3a" stroke-width="0.800"/>
<circle cx="38.600" cy="630" r="3.700" fill="#777" stroke="#d0d0d0" stroke-width="1"/><rect x="39.500" y="631" width="6" height="5.500" fill="#cfcfcf"/>
<rect x="60" y="631" width="6" height="5.500" fill="#b8b8b8"/><circle cx="59.300" cy="630.500" r="3.800" fill="#777" stroke="#c8c8c8" stroke-width="1"/>
<circle cx="80.300" cy="631.500" r="3.600" fill="none" stroke="#7c7c7c" stroke-width="1"/><path d="M80.300 631.500h3" stroke="#7c7c7c" stroke-width="1"/>
<rect x="47" y="653.500" width="14.500" height="11" fill="#5c5c5c" stroke="#c8c8c8" stroke-width="1"/><rect x="53.500" y="649" width="14.500" height="11" fill="#686868" stroke="#d8d8d8" stroke-width="1"/><path d="M53.500 650.300h14.500" stroke="#e0e0e0" stroke-width="1.600"/>
<path d="M32.500 1006.500V877a3.500 3.500 0 0 1 3.500-3.500h234a3.500 3.500 0 0 1 3.500 3.500V1006.500z" fill="#484848" stroke="#1c1c1c" stroke-width="1"/>
<path d="M33 904V877a3 3 0 0 1 3-3h234a3 3 0 0 1 3 3V904z" fill="#2f2f2f"/>
<path d="M33 886.800V877a3 3 0 0 1 3-3h234a3 3 0 0 1 3 3V886.800z" fill="#2a2a2a"/>
<rect x="168.500" y="887.500" width="64" height="17" fill="#484848"/>
<path d="M33 904.500h135.500 M232.500 904.500H273" stroke="#5a5a5a" stroke-width="1"/><path d="M106.500 888v16 M168.500 888v16 M232.500 888v16" stroke="#262626" stroke-width="1"/>
<path d="M38.5 878.1l5 5 M43.5 878.1l-5 5" stroke="#e0e0e0" stroke-width="1.500" fill="none"/><path d="M264.5 877.1v7l-4.500-3.500z M269.5 877.1v7l-4.500-3.500z" fill="#d8d8d8"/><path d="M255.5 894.2h5l-2.500 3.200z" fill="#d8d8d8"/><path d="M261.5 892.4h8 M261.5 894.4h8 M261.5 896.4h8 M261.5 898.4h8" stroke="#d8d8d8" stroke-width="0.900" fill="none"/><rect x="178" y="930.500" width="88.500" height="17.500" rx="1" fill="#4c4c4c" stroke="#353535" stroke-width="1"/>
<rect x="44.0" y="933.5" width="8.500" height="8.500" fill="#9a9a9a" stroke="#d0d0d0" stroke-width="1"/><rect x="48.0" y="937.5" width="8.500" height="8.500" fill="#9a9a9a" stroke="#d0d0d0" stroke-width="1"/>
<rect x="82.0" y="937.5" width="8.500" height="8.500" fill="none" stroke="#6e6e6e" stroke-width="1"/><rect x="78.0" y="933.5" width="8.500" height="8.500" fill="#4a4a4a" stroke="#d8d8d8" stroke-width="1"/>
<rect x="112.0" y="933.5" width="8.500" height="8.500" fill="none" stroke="#d0d0d0" stroke-width="1"/><rect x="116.0" y="937.5" width="8.500" height="8.500" fill="none" stroke="#d0d0d0" stroke-width="1"/>
<rect x="146.5" y="933.5" width="8.500" height="8.500" fill="#777" stroke="#d0d0d0" stroke-width="1"/><rect x="150.5" y="937.5" width="8.500" height="8.500" fill="#777" stroke="#d0d0d0" stroke-width="1"/>
<g fill="#555" stroke="#d0d0d0" stroke-width="1"><rect x="48.500" y="981.500" width="6" height="6"/><rect x="52" y="985" width="6" height="6"/><rect x="55.500" y="988.500" width="6" height="6"/></g>
<g fill="#cfcfcf"><rect x="87" y="981" width="6" height="4"/><rect x="87" y="986" width="6" height="4"/><rect x="94" y="981" width="3" height="4"/><rect x="91" y="987" width="10" height="8.500"/></g>
<rect x="126" y="981" width="9.500" height="9.500" fill="#c8c8c8"/><rect x="131" y="986" width="9.500" height="9.500" fill="#b0b0b0"/>
<rect x="166" y="982" width="9" height="9" fill="#5c5c5c"/><rect x="170" y="986" width="9" height="9" fill="#6a6a6a"/><rect x="170" y="986" width="5" height="5" fill="#d0d0d0"/>
<g fill="none" stroke="#d4d4d4" stroke-width="1"><rect x="204.500" y="981.500" width="8" height="8"/><rect x="209.500" y="986.500" width="8" height="8"/><rect x="209.500" y="986.500" width="3" height="3" fill="#444"/></g>
<rect x="244" y="981.500" width="8" height="8" fill="#3a3a3a" stroke="#666" stroke-width="0.800"/><path d="M248 991.500v3.500h8v-8.500h-3.500" fill="none" stroke="#d4d4d4" stroke-width="1.300"/>
<path d="M1881.500 669V91a4 4 0 0 1 4-4h35v582z" fill="#474747" stroke="#1c1c1c" stroke-width="1"/>
<path d="M1882 99.500V91a3.500 3.500 0 0 1 3.500-3.500h35v12z" fill="#2b2b2b"/>
<path d="M1887.3 90.3l5 5 M1892.3 90.3l-5 5" stroke="#e0e0e0" stroke-width="1.500" fill="none"/><path d="M1906.5 89.3v7l4.500-3.500z M1911.5 89.3v7l4.500-3.500z" fill="#d8d8d8"/><path d="M1882 99.500h38" stroke="#5a5a5a" stroke-width="1"/>
<rect x="1882" y="139.0" width="38" height="6" fill="#3a3a3a"/><path d="M1882 139.5h38" stroke="#262626" stroke-width="1"/><path d="M1882 144.5h38" stroke="#262626" stroke-width="1"/><path d="M1882 145.5h38" stroke="#5a5a5a" stroke-width="1"/>
<path d="M1882 185.0h38" stroke="#262626" stroke-width="1"/><path d="M1882 186.0h38" stroke="#5a5a5a" stroke-width="1"/>
<path d="M1882 254.5h38" stroke="#262626" stroke-width="1"/><path d="M1882 255.5h38" stroke="#5a5a5a" stroke-width="1"/>
<path d="M1882 323.5h38" stroke="#262626" stroke-width="1"/><path d="M1882 324.5h38" stroke="#5a5a5a" stroke-width="1"/>
<path d="M1882 393.0h38" stroke="#262626" stroke-width="1"/><path d="M1882 394.0h38" stroke="#5a5a5a" stroke-width="1"/>
<path d="M1882 433.5h38" stroke="#262626" stroke-width="1"/><path d="M1882 434.5h38" stroke="#5a5a5a" stroke-width="1"/>
<path d="M1882 502.5h38" stroke="#262626" stroke-width="1"/><path d="M1882 503.5h38" stroke="#5a5a5a" stroke-width="1"/>
<path d="M1882 599.7h38" stroke="#262626" stroke-width="1"/><path d="M1882 600.7h38" stroke="#5a5a5a" stroke-width="1"/>
<path d="M1891.4 102.7v3.400M1893.4 102.7v3.400M1895.4 102.7v3.400M1897.4 102.7v3.400M1899.4 102.7v3.400M1901.4 102.7v3.400M1903.4 102.7v3.400M1905.4 102.7v3.400M1907.4 102.7v3.400M1909.4 102.7v3.400" stroke="#161616" stroke-width="1" fill="none"/>
<path d="M1891.4 148.6v3.400M1893.4 148.6v3.400M1895.4 148.6v3.400M1897.4 148.6v3.400M1899.4 148.6v3.400M1901.4 148.6v3.400M1903.4 148.6v3.400M1905.4 148.6v3.400M1907.4 148.6v3.400M1909.4 148.6v3.400" stroke="#161616" stroke-width="1" fill="none"/>
<path d="M1891.4 189.8v3.400M1893.4 189.8v3.400M1895.4 189.8v3.400M1897.4 189.8v3.400M1899.4 189.8v3.400M1901.4 189.8v3.400M1903.4 189.8v3.400M1905.4 189.8v3.400M1907.4 189.8v3.400M1909.4 189.8v3.400" stroke="#161616" stroke-width="1" fill="none"/>
<path d="M1891.4 258.7v3.400M1893.4 258.7v3.400M1895.4 258.7v3.400M1897.4 258.7v3.400M1899.4 258.7v3.400M1901.4 258.7v3.400M1903.4 258.7v3.400M1905.4 258.7v3.400M1907.4 258.7v3.400M1909.4 258.7v3.400" stroke="#161616" stroke-width="1" fill="none"/>
<path d="M1891.4 328.0v3.400M1893.4 328.0v3.400M1895.4 328.0v3.400M1897.4 328.0v3.400M1899.4 328.0v3.400M1901.4 328.0v3.400M1903.4 328.0v3.400M1905.4 328.0v3.400M1907.4 328.0v3.400M1909.4 328.0v3.400" stroke="#161616" stroke-width="1" fill="none"/>
<path d="M1891.4 396.7v3.400M1893.4 396.7v3.400M1895.4 396.7v3.400M1897.4 396.7v3.400M1899.4 396.7v3.400M1901.4 396.7v3.400M1903.4 396.7v3.400M1905.4 396.7v3.400M1907.4 396.7v3.400M1909.4 396.7v3.400" stroke="#161616" stroke-width="1" fill="none"/>
<path d="M1891.4 437.8v3.400M1893.4 437.8v3.400M1895.4 437.8v3.400M1897.4 437.8v3.400M1899.4 437.8v3.400M1901.4 437.8v3.400M1903.4 437.8v3.400M1905.4 437.8v3.400M1907.4 437.8v3.400M1909.4 437.8v3.400" stroke="#161616" stroke-width="1" fill="none"/>
<path d="M1891.4 507.0v3.400M1893.4 507.0v3.400M1895.4 507.0v3.400M1897.4 507.0v3.400M1899.4 507.0v3.400M1901.4 507.0v3.400M1903.4 507.0v3.400M1905.4 507.0v3.400M1907.4 507.0v3.400M1909.4 507.0v3.400" stroke="#161616" stroke-width="1" fill="none"/>
<path d="M1891.4 603.8v3.400M1893.4 603.8v3.400M1895.4 603.8v3.400M1897.4 603.8v3.400M1899.4 603.8v3.400M1901.4 603.8v3.400M1903.4 603.8v3.400M1905.4 603.8v3.400M1907.4 603.8v3.400M1909.4 603.8v3.400" stroke="#161616" stroke-width="1" fill="none"/>
<rect x="1886.300" y="110.500" width="28.700" height="23.500" rx="2" fill="#2e2e2e"/>
<rect x="1886.300" y="639.500" width="28.700" height="23.500" rx="2" fill="#2e2e2e"/>
<g transform="translate(1900.4 124.0)"><path d="M-9.500 1.500c0-4.500 4.500-7.500 10.500-7.500 5 0 8.500 2.500 8.500 6 0 4-4 7-10 7-2 0-3-.8-3.500-1.500-.6-.9-1.500-1-3-1-1.500 0-2.500-1-2.500-3z" fill="#d4d4d4"/><circle cx="-5.500" cy="1.500" r="1.400" fill="#3a3a3a"/><circle cx="-1.500" cy="3.500" r="1.300" fill="#3a3a3a"/><circle cx="3" cy="2.500" r="1.300" fill="#3a3a3a"/><circle cx="5.500" cy="-1" r="1.300" fill="#3a3a3a"/><circle cx="2" cy="-3.500" r="1.200" fill="#3a3a3a"/></g>
<g transform="translate(1900.4 168.5)"><path d="M-7.500 -8.500a16.500 16.500 0 0 1 16.500 16.500h-16.500z" fill="#8a8a8a" stroke="#dcdcdc" stroke-width="1"/><path d="M-7.500 8l4-16 M-7.500 8l8.500-14 M-7.500 8l13-9.500 M-7.500 8l16-4" stroke="#c8c8c8" stroke-width="0.700"/><path d="M-7.500 -8.500a16.500 16.500 0 0 1 4 .5l-4 16z" fill="#d8d8d8"/><path d="M9 8h-16.500l16-4z" fill="#4a4a4a"/></g>
<g transform="translate(1900.4 209.0)"><rect x="-4" y="1" width="8" height="8" fill="#cfcfcf"/><path d="M-2.500 1l-2.500-6.500q-2-1.500-1.500-4 2.500 1 3 3.500l2.500 7z M-0.600 1v-8.500l.6-2.500 1.600 2.500v8.500z M2 1l2.500-6q.5-2 4-1.500-.5 2.500-2.500 3l-2.500 4.500z" fill="#d4d4d4"/></g>
<g transform="translate(1900.4 237.5)"><circle cx="0" cy="-4.500" r="3.800" fill="#d4d4d4"/><circle cx="-4.200" cy="1" r="3.800" fill="#d4d4d4"/><circle cx="4.200" cy="1" r="3.800" fill="#d4d4d4"/><path d="M-1 0h2l.5 5.500 3 2.500h-9l3-2.500z" fill="#d4d4d4"/></g>
<g transform="translate(1900.4 278.0)"><path d="M-8.500 -6h17" stroke="#d4d4d4" stroke-width="1"/><path d="M-8.500 -1.500h17" stroke="#d4d4d4" stroke-width="2.200"/><path d="M-8.500 4h17" stroke="#cfcfcf" stroke-width="3.200"/></g>
<g transform="translate(1900.4 307.0)"><circle cx="-3" cy="-2.500" r="6" fill="#c6c6c6"/><circle cx="2" cy="2" r="5.800" fill="#8e8e8e" stroke="#dcdcdc" stroke-width="1.200"/></g>
<g transform="translate(1900.4 347.3)"><circle cx="0" cy="0" r="8" fill="none" stroke="#d4d4d4" stroke-width="1.100" stroke-dasharray="2.600 1.600"/><circle cx="0" cy="0" r="5.300" fill="#c2c2c2"/></g>
<g transform="translate(1900.4 376.0)"><path d="M-5 -1v-6.500h13.500v13.500h-6.500" fill="none" stroke="#d4d4d4" stroke-width="1.100"/><rect x="-8" y="-0.500" width="5.500" height="5.500" fill="none" stroke="#d4d4d4" stroke-width="1.100"/><rect x="-5.500" y="2" width="5.500" height="5.500" fill="#9a9a9a" stroke="#d4d4d4" stroke-width="1"/></g>
<g transform="translate(1900.4 415.3)"><rect x="-8.800" y="-8" width="10.500" height="13.500" fill="#4f4f4f" stroke="#d4d4d4" stroke-width="1.100"/><rect x="-4.500" y="-1" width="13" height="10" fill="#5a5a5a" stroke="#d4d4d4" stroke-width="1.100"/></g>
<g transform="translate(1900.4 457.7)"><path d="M-7.500 -7v14l15.500-7z" fill="#cfcfcf"/></g>
<g transform="translate(1900.4 485.2)"><path d="M-2.500 -3.800h-2.500a3.800 3.800 0 0 0 0 7.600h2.500 M2.500 -3.800h2.500a3.800 3.800 0 0 1 0 7.600h-2.500" fill="none" stroke="#d4d4d4" stroke-width="2.300"/><path d="M-4.500 0h9" stroke="#d4d4d4" stroke-width="1.600"/></g>
<text x="1898.9" y="531.500" font-family="Liberation Sans,sans-serif" font-weight="bold" font-size="16.500" fill="#cfcfcf" text-anchor="middle">A</text><path d="M1907.500 517v17.500" stroke="#d8d8d8" stroke-width="0.900"/>
<g transform="translate(1900.4 553.5)"><path d="M-2.500 -7.500h8v1.500h-1.500v14h-1.500v-14h-1.500v14h-1.500v-8a3.800 3.800 0 0 1 -.5 -7.500z" fill="#d4d4d4"/></g>
<text x="1900.4" y="590.500" font-family="Liberation Serif,serif" font-style="italic" font-weight="bold" font-size="23" fill="#cfcfcf" text-anchor="middle">O</text>
<rect x="1892.1" y="617.3" width="16.500" height="11" fill="url(#tg)" stroke="#dcdcdc" stroke-width="1.100"/>
<g transform="translate(1900.4 651.3)"><rect x="-8" y="-5.500" width="16" height="11" fill="#c8c8c8"/><rect x="-6.800" y="-4.300" width="4" height="4" fill="#111"/><rect x="-1.800" y="-4.300" width="4" height="4" fill="#444"/><rect x="3.200" y="-4.300" width="4" height="4" fill="#8a8a8a"/><rect x="-6.800" y="0.700" width="4" height="4" fill="#7a7a7a"/><rect x="-1.800" y="0.700" width="4" height="4" fill="#666"/><rect x="3.200" y="0.700" width="4" height="4" fill="#555"/></g>
</svg>
<div class="t" style="left:1692.60px;top:131.03px;font-size:11.00px;font-weight:bold;color:#e0e0e0;transform:scaleX(0.9091);transform-origin:0 50%;">C</div>
<div class="t" style="left:1864.60px;top:131.27px;font-size:10.50px;font-weight:bold;color:#e0e0e0;transform:scaleX(0.8133);transform-origin:0 50%;">%</div>
<div class="t" style="left:1691.90px;top:156.13px;font-size:11.00px;font-weight:bold;color:#e0e0e0;transform:scaleX(0.9363);transform-origin:0 50%;">M</div>
<div class="t" style="left:1864.60px;top:156.37px;font-size:10.50px;font-weight:bold;color:#e0e0e0;transform:scaleX(0.8133);transform-origin:0 50%;">%</div>
<div class="t" style="left:1692.70px;top:181.03px;font-size:11.00px;font-weight:bold;color:#e0e0e0;transform:scaleX(0.9569);transform-origin:0 50%;">Y</div>
<div class="t" style="left:1864.60px;top:181.27px;font-size:10.50px;font-weight:bold;color:#e0e0e0;transform:scaleX(0.8133);transform-origin:0 50%;">%</div>
<div class="t" style="left:1692.80px;top:206.03px;font-size:11.00px;font-weight:bold;color:#e0e0e0;transform:scaleX(0.8586);transform-origin:0 50%;">K</div>
<div class="t" style="left:1864.60px;top:206.27px;font-size:10.50px;font-weight:bold;color:#e0e0e0;transform:scaleX(0.8133);transform-origin:0 50%;">%</div>
<div class="t" style="left:1565.40px;top:373.08px;font-size:11.20px;font-weight:bold;color:#e6e6e6;transform:scaleX(0.8966);transform-origin:0 50%;">Vorlage</div>
<div class="t" style="left:1565.40px;top:394.03px;font-size:11.20px;font-weight:bold;color:#e6e6e6;transform:scaleX(0.8929);transform-origin:0 50%;">Hilfslinien</div>
<div class="t" style="left:1565.40px;top:415.03px;font-size:11.20px;font-weight:bold;color:#e6e6e6;transform:scaleX(0.8945);transform-origin:0 50%;">Druckdaten</div>
<div class="t" style="left:1474.90px;top:346.93px;font-size:11.20px;font-weight:bold;color:#ececec;transform:scaleX(0.9003);transform-origin:0 50%;">Ebenen</div>
<div class="t" style="left:1653.60px;top:102.93px;font-size:11.20px;font-weight:bold;color:#ececec;transform:scaleX(0.9174);transform-origin:0 50%;">Farbe</div>
<div class="t" style="left:1472.80px;top:787.93px;font-size:11.20px;font-weight:bold;color:#e6e6e6;transform:scaleX(0.8738);transform-origin:0 50%;">3 Ebenen</div>
<div class="t" style="left:40.60px;top:889.73px;font-size:11.20px;font-weight:bold;color:#a9a9a9;transform:scaleX(0.9628);transform-origin:0 50%;">Transformiei</div>
<div class="t" style="left:112.40px;top:889.73px;font-size:11.20px;font-weight:bold;color:#a9a9a9;transform:scaleX(0.9398);transform-origin:0 50%;">Ausrichten</div>
<div class="t" style="left:174.60px;top:889.73px;font-size:11.20px;font-weight:bold;color:#f0f0f0;transform:scaleX(0.9425);transform-origin:0 50%;">Pathfinder</div>
<div class="t" style="left:38.40px;top:910.73px;font-size:11.20px;font-weight:bold;color:#e6e6e6;transform:scaleX(0.8877);transform-origin:0 50%;">Formmodi:</div>
<div class="t" style="left:194.00px;top:934.63px;font-size:11.20px;font-weight:bold;color:#757575;transform:scaleX(0.8913);transform-origin:0 50%;">Umwandeln</div>
<div class="t" style="left:38.40px;top:958.73px;font-size:11.20px;font-weight:bold;color:#e6e6e6;transform:scaleX(0.8776);transform-origin:0 50%;">Pathfinder:</div>

</div>
</body></html>
